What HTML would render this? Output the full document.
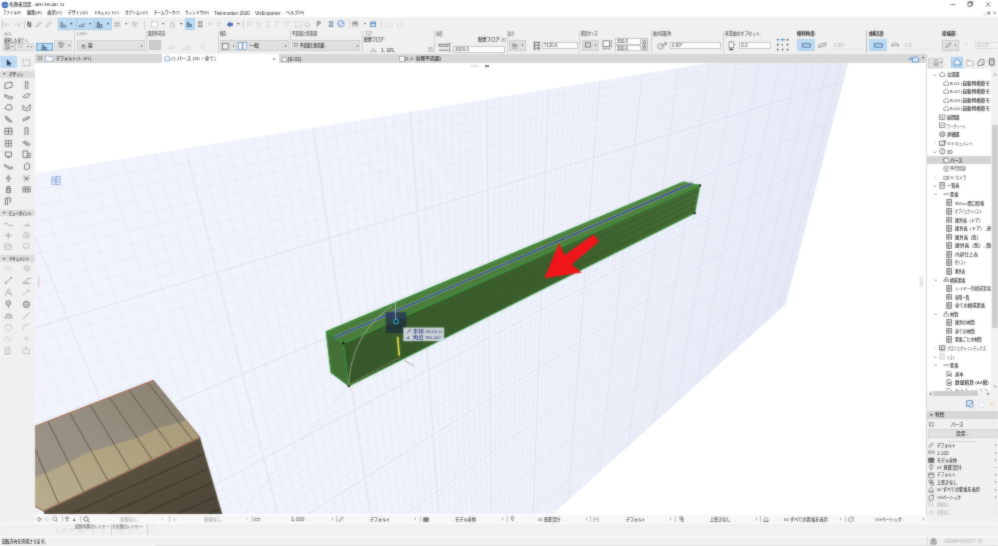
<!DOCTYPE html>
<html lang="ja"><head><meta charset="utf-8"><title>ARCHICAD 24</title>
<style>
html,body{margin:0;padding:0;}
body{width:998px;height:546px;overflow:hidden;background:#fff;position:relative;font-family:"Liberation Sans","Noto Sans CJK JP",sans-serif;filter:url(#soft);}
.b{position:absolute;display:block;}
.t{position:absolute;white-space:nowrap;line-height:1;transform-origin:0 50%;font-weight:500;}
</style></head>
<body>
<svg width="0" height="0" style="position:absolute"><filter id="soft" x="0" y="0" width="100%" height="100%" color-interpolation-filters="sRGB"><feGaussianBlur stdDeviation="0.8" result="b"/><feComposite in="SourceGraphic" in2="b" operator="arithmetic" k1="0" k2="0.5" k3="0.5" k4="0"/></filter></svg>
<div class="b" style="left:0px;top:0px;width:998px;height:17px;background:#ffffff;"></div>
<div class="b" style="left:0px;top:17px;width:998px;height:37px;background:#f0f0f0;"></div>
<div class="b" style="left:0px;top:54px;width:35px;height:470px;background:#f0f0f0;"></div>
<div class="b" style="left:35px;top:54.3px;width:892px;height:8.4px;background:#d7d7d7;"></div>
<div class="b" style="left:927px;top:54px;width:71px;height:462px;background:#f0f0f0;"></div>
<div class="b" style="left:35px;top:62.7px;width:892px;height:451.8px;background:#ffffff;"></div>
<div class="b" style="left:35px;top:514.5px;width:892px;height:8.5px;background:#f7f7f7;"></div>
<div class="b" style="left:927px;top:515px;width:71px;height:8px;background:#f0f0f0;"></div>
<div class="b" style="left:0px;top:523px;width:998px;height:13px;background:#f0f0f0;"></div>
<div class="b" style="left:0px;top:536px;width:998px;height:10px;background:#f1f1f1;"></div>
<div class="b" style="left:0px;top:523px;width:998px;height:1px;background:#fafafa;"></div>
<div class="b" style="left:0px;top:536px;width:998px;height:1px;background:#fbfbfb;"></div>
<div class="b" style="left:155px;top:545px;width:843px;height:1px;background:#d9d9d9;"></div>
<svg class="b" style="left:35px;top:62.7px;" width="892" height="451.8" viewBox="35 62.7 892 451.8"><defs><clipPath id="vp"><rect x="35" y="62.7" width="892" height="451.8"/></clipPath><linearGradient id="pl" gradientUnits="userSpaceOnUse" x1="250" y1="470" x2="850" y2="70"><stop offset="0" stop-color="#f1f4fc"/><stop offset="0.5" stop-color="#eff2fb"/><stop offset="1" stop-color="#edf0fa"/></linearGradient><clipPath id="plane"><polygon points="-244.7,218.6 854.5,39.0 785.6,304.1 163.7,865.0"/></clipPath></defs><g clip-path="url(#vp)"><polygon points="-244.7,218.6 854.5,39.0 785.6,304.1 163.7,865.0" fill="url(#pl)"/><g clip-path="url(#plane)" fill="none"><path d="M853.5 39.2L784.6 305.0M852.3 39.4L783.3 306.1M851.0 39.6L782.1 307.3M849.7 39.8L780.8 308.4M848.4 40.0L779.5 309.6M845.8 40.4L776.8 312.0M844.4 40.6L775.5 313.2M843.1 40.9L774.2 314.4M841.7 41.1L772.8 315.6M840.3 41.3L771.5 316.8M838.9 41.5L770.1 318.1M837.5 41.8L768.7 319.3M836.1 42.0L767.3 320.6M834.7 42.2L765.9 321.8M831.8 42.7L763.1 324.4M830.3 43.0L761.7 325.7M828.8 43.2L760.2 327.0M827.3 43.4L758.7 328.3M825.8 43.7L757.3 329.6M824.3 43.9L755.8 331.0M822.7 44.2L754.3 332.3M821.2 44.4L752.8 333.7M819.6 44.7L751.3 335.0M816.4 45.2L748.2 337.8M814.7 45.5L746.7 339.2M813.1 45.8L745.1 340.6M811.4 46.0L743.5 342.0M809.7 46.3L741.9 343.5M808.0 46.6L740.3 344.9M806.3 46.9L738.7 346.4M804.6 47.2L737.1 347.9M802.8 47.4L735.4 349.3M799.3 48.0L732.1 352.3M797.5 48.3L730.4 353.9M795.6 48.6L728.7 355.4M793.8 48.9L727.0 357.0M791.9 49.2L725.2 358.5M790.0 49.5L723.5 360.1M788.1 49.9L721.7 361.7M786.1 50.2L719.9 363.3M784.2 50.5L718.2 364.9M780.2 51.1L714.5 368.2M778.2 51.5L712.7 369.8M776.1 51.8L710.8 371.5M774.0 52.1L708.9 373.2M771.9 52.5L707.1 374.9M769.8 52.8L705.1 376.6M767.6 53.2L703.2 378.4M765.5 53.5L701.3 380.1M763.3 53.9L699.3 381.9M758.8 54.6L695.3 385.5M756.5 55.0L693.3 387.3M754.2 55.4L691.3 389.1M751.8 55.8L689.2 391.0M749.5 56.2L687.2 392.9M747.0 56.6L685.1 394.8M744.6 57.0L683.0 396.7M742.1 57.4L680.8 398.6M739.7 57.8L678.7 400.5M734.6 58.6L674.3 404.5M732.0 59.0L672.1 406.5M729.3 59.5L669.8 408.5M726.7 59.9L667.6 410.5M724.0 60.3L665.3 412.6M721.2 60.8L663.0 414.7M718.4 61.2L660.7 416.8M715.6 61.7L658.3 418.9M712.8 62.2L655.9 421.0M707.0 63.1L651.1 425.4M704.0 63.6L648.7 427.6M701.0 64.1L646.2 429.8M697.9 64.6L643.7 432.1M694.8 65.1L641.2 434.4M691.7 65.6L638.6 436.7M688.5 66.1L636.0 439.0M685.2 66.7L633.4 441.3M681.9 67.2L630.8 443.7M675.2 68.3L625.4 448.5M671.8 68.9L622.7 451.0M668.3 69.4L620.0 453.5M664.7 70.0L617.2 456.0M661.1 70.6L614.4 458.5M657.5 71.2L611.5 461.1M653.7 71.8L608.6 463.7M650.0 72.4L605.7 466.3M646.1 73.0L602.8 468.9M638.3 74.3L596.8 474.3M634.3 75.0L593.8 477.1M630.2 75.7L590.7 479.8M626.0 76.3L587.6 482.7M621.8 77.0L584.5 485.5M617.5 77.7L581.3 488.4M613.1 78.4L578.1 491.3M608.6 79.2L574.8 494.2M604.1 79.9L571.5 497.2M594.8 81.4L564.8 503.2M590.1 82.2L561.4 506.3M585.2 83.0L557.9 509.4M580.2 83.8L554.4 512.6M575.2 84.6L550.9 515.8M570.1 85.5L547.3 519.0M564.9 86.3L543.6 522.3M559.5 87.2L540.0 525.6M554.1 88.1L536.2 529.0M542.9 89.9L528.7 535.8M537.2 90.8L524.8 539.3M531.3 91.8L520.9 542.8M525.3 92.8L516.9 546.4M519.2 93.8L512.9 550.1M513.0 94.8L508.8 553.7M506.7 95.8L504.7 557.5M500.2 96.9L500.5 561.2M493.6 98.0L496.2 565.1M479.9 100.2L487.6 572.9M472.8 101.4L483.1 576.9M465.6 102.5L478.7 580.9M458.2 103.7L474.1 585.0M450.7 105.0L469.5 589.1M443.0 106.2L464.8 593.4M435.1 107.5L460.1 597.6M427.0 108.8L455.3 602.0M418.8 110.2L450.4 606.4M401.6 113.0L440.5 615.4M392.8 114.4L435.4 620.0M383.7 115.9L430.2 624.6M374.4 117.5L424.9 629.4M364.8 119.0L419.6 634.2M355.0 120.6L414.2 639.0M344.9 122.3L408.7 644.0M334.6 123.9L403.1 649.0M324.0 125.7L397.5 654.1M302.0 129.3L385.9 664.6M290.5 131.2L379.9 669.9M278.7 133.1L373.9 675.4M266.5 135.1L367.8 680.9M254.0 137.1L361.5 686.5M241.1 139.2L355.2 692.2M227.9 141.4L348.8 698.1M214.2 143.6L342.2 704.0M200.1 145.9L335.6 710.0M170.6 150.7L321.9 722.3M155.2 153.3L314.9 728.6M139.2 155.9L307.8 735.0M122.7 158.6L300.5 741.6M105.6 161.4L293.1 748.2M88.0 164.2L285.6 755.0M69.7 167.2L277.9 761.9M50.8 170.3L270.2 769.0M31.2 173.5L262.2 776.1M-10.2 180.3L245.9 790.8M-32.2 183.9L237.5 798.4M-54.9 187.6L228.9 806.1M-78.6 191.5L220.2 814.0M-103.3 195.5L211.3 822.0M-128.9 199.7L202.2 830.2M-155.7 204.1L193.0 838.5M-183.6 208.6L183.6 847.1M-212.8 213.4L173.9 855.7M-275.2 223.6L154.1 873.7M-308.7 229.1L143.8 882.9M-343.8 234.8L133.4 892.3M-380.6 240.8L122.7 902.0M-419.3 247.1L111.8 911.8M853.4 43.3L-233.0 237.2M852.3 47.6L-221.6 255.2M851.1 51.9L-210.5 272.7M850.0 56.2L-199.8 289.6M848.9 60.4L-189.5 306.0M847.8 64.6L-179.4 322.0M846.8 68.8L-169.6 337.5M845.7 72.9L-160.1 352.5M844.6 77.1L-150.8 367.2M842.5 85.2L-133.1 395.3M841.4 89.3L-124.6 408.7M840.4 93.3L-116.3 421.8M839.3 97.3L-108.2 434.6M838.3 101.3L-100.4 447.1M837.3 105.2L-92.7 459.2M836.3 109.2L-85.2 471.0M835.2 113.1L-78.0 482.5M834.2 116.9L-70.9 493.8M832.2 124.6L-57.2 515.5M831.3 128.4L-50.6 525.9M830.3 132.2L-44.1 536.1M829.3 136.0L-37.8 546.1M828.3 139.7L-31.6 555.9M827.3 143.5L-25.6 565.4M826.4 147.2L-19.7 574.7M825.4 150.8L-14.0 583.8M824.5 154.5L-8.4 592.7M822.6 161.7L2.5 610.0M821.7 165.3L7.8 618.3M820.7 168.9L13.0 626.5M819.8 172.4L18.0 634.5M818.9 176.0L23.0 642.3M818.0 179.5L27.8 650.0M817.1 183.0L32.6 657.5M816.2 186.4L37.3 664.9M815.3 189.9L41.8 672.2M813.5 196.7L50.7 686.2M812.6 200.1L55.0 693.0M811.7 203.5L59.2 699.7M810.9 206.9L63.4 706.3M810.0 210.2L67.5 712.7M809.1 213.5L71.4 719.0M808.3 216.8L75.4 725.3M807.4 220.1L79.2 731.4M806.6 223.3L83.0 737.3M804.9 229.8L90.4 749.0M804.1 233.0L94.0 754.7M803.2 236.2L97.5 760.3M802.4 239.4L100.9 765.7M801.6 242.5L104.4 771.1M800.8 245.7L107.7 776.4M800.0 248.8L111.0 781.6M799.2 251.9L114.2 786.8M798.4 255.0L117.4 791.8M796.8 261.1L123.6 801.6M796.0 264.2L126.7 806.4M795.2 267.2L129.6 811.2M794.4 270.2L132.6 815.8M793.6 273.2L135.5 820.4M792.9 276.1L138.3 824.9M792.1 279.1L141.1 829.3M791.3 282.0L143.9 833.7M790.6 285.0L146.6 838.0M789.1 290.8L151.9 846.4M788.3 293.7L154.5 850.5M787.6 296.5L157.0 854.5M786.8 299.4L159.6 858.5M786.1 302.2L162.0 862.5" stroke="#dce1f0" stroke-width="0.4"/><path d="M847.1 40.2L778.2 310.8M833.2 42.5L764.5 323.1M818.0 45.0L749.8 336.4M801.1 47.7L733.8 350.8M782.2 50.8L716.3 366.5M761.0 54.3L697.3 383.7M737.1 58.2L676.5 402.5M709.9 62.6L653.5 423.2M678.6 67.7L628.1 446.1M642.2 73.7L599.8 471.6M599.5 80.7L568.2 500.2M548.6 89.0L532.5 532.4M486.8 99.1L491.9 568.9M410.3 111.6L445.5 610.8M313.1 127.5L391.7 659.3M185.6 148.3L328.8 716.1M10.9 176.8L254.1 783.4M-243.3 218.4L164.1 864.6M843.5 81.2L-141.8 381.4M833.2 120.8L-63.9 504.8M823.5 158.1L-2.9 601.4M814.4 193.3L46.3 679.2M805.7 226.6L86.7 743.2M797.6 258.1L120.5 796.8M789.8 287.9L149.3 842.2" stroke="#d3d9ea" stroke-width="0.7"/></g><defs><linearGradient id="wgr" x1="0" y1="1" x2="1" y2="0"><stop offset="0" stop-color="#9f978b"/><stop offset="0.5" stop-color="#968e80"/><stop offset="1" stop-color="#897f70"/></linearGradient><linearGradient id="wye" x1="0" y1="1" x2="1" y2="0"><stop offset="0" stop-color="#b8ad8e"/><stop offset="1" stop-color="#a89b78"/></linearGradient><linearGradient id="wfr" x1="0" y1="0" x2="1" y2="1"><stop offset="0" stop-color="#625947"/><stop offset="1" stop-color="#4c4436"/></linearGradient></defs><polygon points="43.7,510.7 200.0,437.0 223.5,518.0 45.0,518.0" fill="url(#wfr)"/><line x1="203.0" y1="453.8" x2="40.0" y2="527.5" stroke="#3d3529" stroke-width="1.1"/><line x1="207.2" y1="468.9" x2="40.0" y2="544.5" stroke="#3d3529" stroke-width="1.1"/><line x1="211.3" y1="482.6" x2="40.0" y2="560.0" stroke="#3d3529" stroke-width="1.1"/><line x1="215.4" y1="496.4" x2="40.0" y2="575.7" stroke="#3d3529" stroke-width="1.1"/><line x1="219.6" y1="508.7" x2="40.0" y2="589.9" stroke="#3d3529" stroke-width="1.1"/><line x1="223.5" y1="521.0" x2="40.0" y2="603.9" stroke="#3d3529" stroke-width="1.1"/><polygon points="30.0,427.9 153.4,379.9 200.0,437.0 43.7,510.7 30.0,503.3" fill="url(#wgr)"/><polygon points="30.0,479.5 57.5,467.5 90.0,451.5 139.4,437.0 159.2,427.2 182.3,421.4 185.2,418.8 200.0,437.0 43.7,510.7 30.0,503.3" fill="url(#wye)"/><line x1="147.7" y1="382.1" x2="193.0" y2="440.3" stroke="#5a4c3d" stroke-width="0.85"/><line x1="128.7" y1="389.5" x2="172.4" y2="449.0" stroke="#5a4c3d" stroke-width="0.85"/><line x1="109.4" y1="397.0" x2="151.8" y2="458.7" stroke="#5a4c3d" stroke-width="0.85"/><line x1="90.0" y1="404.6" x2="130.3" y2="469.9" stroke="#5a4c3d" stroke-width="0.85"/><line x1="69.7" y1="412.4" x2="108.0" y2="480.4" stroke="#5a4c3d" stroke-width="0.85"/><line x1="47.9" y1="421.0" x2="83.8" y2="491.9" stroke="#5a4c3d" stroke-width="0.85"/><line x1="26.4" y1="429.3" x2="58.8" y2="503.6" stroke="#5a4c3d" stroke-width="0.85"/><polyline points="30.0,427.9 153.4,379.9" fill="none" stroke="#a86a56" stroke-width="1.1"/><polyline points="200.0,437.0 43.7,510.7 30.0,503.3" fill="none" stroke="#9c6f58" stroke-width="1.3"/><polyline points="153.4,379.9 200.0,437.0" fill="none" stroke="#7d6a56" stroke-width="0.8"/><defs><linearGradient id="bfr" x1="0" y1="1" x2="1" y2="0"><stop offset="0" stop-color="#36582a"/><stop offset="0.6" stop-color="#3c5f2d"/><stop offset="1" stop-color="#466c37"/></linearGradient><linearGradient id="btp" x1="0" y1="1" x2="1" y2="0"><stop offset="0" stop-color="#497b3a"/><stop offset="1" stop-color="#528340"/></linearGradient></defs><polygon points="326.1,331.2 343.4,343.0 348.8,385.8 331.0,372.4" fill="#447037" stroke="#35973a" stroke-width="1"/><polygon points="343.4,343.0 699.9,185.1 694.7,212.8 348.8,385.8" fill="url(#bfr)" stroke="#35973a" stroke-width="1"/><polygon points="326.1,331.2 683.4,181.6 699.9,185.1 343.4,343.0" fill="url(#btp)" stroke="#35973a" stroke-width="1"/><line x1="344.5" y1="351.6" x2="698.9" y2="190.6" stroke="#345a25" stroke-width="0.8"/><line x1="345.6" y1="360.1" x2="697.8" y2="196.2" stroke="#345a25" stroke-width="0.8"/><line x1="346.6" y1="368.7" x2="696.8" y2="201.7" stroke="#345a25" stroke-width="0.8"/><line x1="347.7" y1="377.2" x2="695.7" y2="207.3" stroke="#345a25" stroke-width="0.8"/><line x1="327.6" y1="343.6" x2="345.0" y2="355.8" stroke="#406b2f" stroke-width="0.7"/><line x1="328.6" y1="351.8" x2="346.1" y2="364.4" stroke="#406b2f" stroke-width="0.7"/><line x1="329.5" y1="360.0" x2="347.2" y2="373.0" stroke="#406b2f" stroke-width="0.7"/><line x1="334.8" y1="337.1" x2="691.6" y2="183.3" stroke="#78957a" stroke-width="3.4" opacity="0.8"/><line x1="334.8" y1="337.1" x2="691.6" y2="183.3" stroke="#2f4fa0" stroke-width="1.3"/><circle cx="343.4" cy="343.0" r="1.2" fill="#0c140c"/><circle cx="348.8" cy="385.8" r="1.2" fill="#0c140c"/><circle cx="699.9" cy="185.1" r="1.2" fill="#0c140c"/><circle cx="694.7" cy="212.8" r="1.2" fill="#0c140c"/><path d="M348 386 C326 412 296 446 269 478 S250 506 244 518" fill="none" stroke="#d8dcea" stroke-width="0.5"/><path d="M348.8 384 C350 352 366 322 392 306" fill="none" stroke="#b4c2a6" stroke-width="0.7"/><line x1="349.5" y1="384" x2="400" y2="357" stroke="#c9a26a" stroke-width="0.7" stroke-dasharray="1.5 1"/><rect x="385.8" y="312" width="20.5" height="20.7" fill="#18223f" opacity="0.62"/><rect x="385.8" y="312" width="20.5" height="8" fill="#2a3f9a" opacity="0.25"/><line x1="395.5" y1="299" x2="395.5" y2="318.5" stroke="#cfd6e2" stroke-width="0.6"/><circle cx="396" cy="321.2" r="2.3" fill="#16364e" stroke="#2f9fbd" stroke-width="1.1"/><line x1="397.7" y1="336.5" x2="399.2" y2="355.5" stroke="#efe043" stroke-width="1.8"/><line x1="404.4" y1="360" x2="414.5" y2="366" stroke="#9a9a98" stroke-width="0.8"/><rect x="403.3" y="327.2" width="40.8" height="13.6" fill="#d3d9de" opacity="0.96"/><polygon points="544.4,278 559.2,242.4 564.4,254.9 593.5,234.1 599.2,241.2 571.7,264.2 581.9,272.3" fill="#ef151b"/><g stroke="#6a8ccb" stroke-width="0.6" fill="none"><rect x="51.8" y="176.6" width="3.4" height="7.4"/><rect x="56.2" y="176" width="3.8" height="8.2"/><path d="M51.8 179h3.4M51.8 181.4h3.4M56.2 178.8h3.8M56.2 181.4h3.8"/></g><rect x="37.6" y="276" width="2" height="11" fill="#ecd3d4"/><rect x="470" y="64.6" width="9" height="2.4" rx="1" fill="#e4e4e4"/><rect x="485" y="64.8" width="4" height="2" fill="#777"/><rect x="919.5" y="276" width="3.5" height="11" fill="#e6e6e6"/></g></svg>
<span class="t" style="left:405.50px;top:330.00px;font-size:4.4px;color:#24327e;transform:scaleX(1.239);">&#8599; 半径 4101.0</span>
<span class="t" style="left:405.50px;top:336.00px;font-size:4.4px;color:#24327e;transform:scaleX(1.287);">&#8737; 角度 90.00&#176;</span>
<svg class="b" style="left:1px;top:1px;" width="8" height="8" viewBox="0 0 8 8"><circle cx="4" cy="4" r="3.3" fill="#2d5fa8"/><path d="M1.2 5.2C3 3 5 3 6.8 4.6" stroke="#cfe0f5" stroke-width="0.8" fill="none"/><path d="M2 6.2C3.5 4.6 5 4.8 6.2 6" stroke="#9fc0ea" stroke-width="0.6" fill="none"/></svg>
<span class="t" style="left:9.50px;top:3.00px;font-size:4.4px;color:#1a1a1a;">名称未設定 - ARCHICAD 24</span>
<svg class="b" style="left:945px;top:0px;" width="53" height="10" viewBox="0 0 53 10"><path d="M5.5 4.5h5" stroke="#444" stroke-width="0.7"/><rect x="23" y="2.6" width="3.6" height="3.6" fill="none" stroke="#333" stroke-width="0.7"/><path d="M24 2.6v-0.9h3.6v3.6h-1" fill="none" stroke="#333" stroke-width="0.6"/><path d="M41 2.2l4.4 4.4M45.4 2.2l-4.4 4.4" stroke="#333" stroke-width="0.7"/></svg>
<svg class="b" style="left:982px;top:10px;" width="16" height="6" viewBox="0 0 16 6"><path d="M1.5 4.6h2" stroke="#666" stroke-width="0.5"/><path d="M6 1.4v3.2M7.6 1.4v3.2M5.2 2.4h3.2M5.2 3.8h3.2" stroke="#555" stroke-width="0.5"/><path d="M11.4 1.6l2.4 2.6M13.8 1.6l-2.4 2.6" stroke="#444" stroke-width="0.6"/></svg>
<span class="t" style="left:3.00px;top:11.00px;font-size:4.4px;color:#1c1c1c;transform:scaleX(0.777);">ファイル(F)</span>
<span class="t" style="left:27.00px;top:11.00px;font-size:4.4px;color:#1c1c1c;transform:scaleX(1.025);">編集(E)</span>
<span class="t" style="left:47.00px;top:11.00px;font-size:4.4px;color:#1c1c1c;transform:scaleX(1.025);">表示(V)</span>
<span class="t" style="left:68.00px;top:11.00px;font-size:4.4px;color:#1c1c1c;transform:scaleX(0.845);">デザイン(D)</span>
<span class="t" style="left:94.00px;top:11.00px;font-size:4.4px;color:#1c1c1c;transform:scaleX(0.770);">ドキュメント(C)</span>
<span class="t" style="left:125.00px;top:11.00px;font-size:4.4px;color:#1c1c1c;transform:scaleX(0.813);">オプション(O)</span>
<span class="t" style="left:154.00px;top:11.00px;font-size:4.4px;color:#1c1c1c;transform:scaleX(0.817);">チームワーク(T)</span>
<span class="t" style="left:185.00px;top:11.00px;font-size:4.4px;color:#1c1c1c;transform:scaleX(0.827);">ウィンドウ(W)</span>
<span class="t" style="left:214.00px;top:11.00px;font-size:5.0px;color:#1c1c1c;transform:scaleX(0.952);">Twinmotion 2020</span>
<span class="t" style="left:255.00px;top:11.00px;font-size:5.0px;color:#1c1c1c;">VizExporter</span>
<span class="t" style="left:286.00px;top:11.00px;font-size:4.4px;color:#1c1c1c;transform:scaleX(0.934);">ヘルプ(H)</span>
<div class="b" style="left:1.5px;top:19.5px;width:0.8px;height:9px;background:#c4c4c4;"></div>
<svg class="b" style="left:3.5px;top:20.5px;" width="7" height="7" viewBox="0 0 7 7"><path d="M1 2.2v2.6h2.6M1.2 4.6C2.4 2.4 5.4 2.2 6.2 5" fill="none" stroke="#c2c2c2" stroke-width="0.7"/></svg>
<svg class="b" style="left:13.5px;top:20.5px;" width="7" height="7" viewBox="0 0 7 7"><path d="M6 2.2v2.6H3.4M5.8 4.6C4.6 2.4 1.6 2.2 0.8 5" fill="none" stroke="#c2c2c2" stroke-width="0.7"/></svg>
<div class="b" style="left:23.5px;top:19.5px;width:0.7px;height:9.0px;background:#d0d0d0;"></div>
<svg class="b" style="left:26.2px;top:20.7px;" width="6.6" height="6.6" viewBox="0 0 7 7"><path d="M2.2 0.8v2.4M4.6 0.8v2.4M1.2 3.2h4.6M2.2 3.2v2.8h2.4V3.2" fill="none" stroke="#3a3a3a" stroke-width="0.8"/><circle cx="2.4" cy="1.4" r="0.8" fill="#3a3a3a"/><circle cx="4.8" cy="5.4" r="0.8" fill="#3a3a3a"/></svg>
<svg class="b" style="left:35.0px;top:20.5px;" width="7" height="7" viewBox="0 0 7 7"><path d="M1 6l0.6-1.8L5.4 0.8l1 1L2.8 5.6z" fill="none" stroke="#9a9a9a" stroke-width="0.7"/></svg>
<svg class="b" style="left:45.0px;top:20.5px;" width="7" height="7" viewBox="0 0 7 7"><path d="M1 6l0.6-1.8L5.4 0.8l1 1L2.8 5.6z" fill="none" stroke="#a8a8a8" stroke-width="0.7"/></svg>
<div class="b" style="left:58px;top:18px;width:53.5px;height:11.5px;background:#bddcf4;box-shadow:inset 0 0 0 1px #a8cdea;"></div>
<svg class="b" style="left:60.0px;top:20.5px;" width="7" height="7" viewBox="0 0 7 7"><path d="M0.8 6h5.6L1.2 0.8z" fill="none" stroke="#3a4a5a" stroke-width="0.7"/><path d="M2.4 6V3.6" stroke="#3a4a5a" stroke-width="0.7"/></svg>
<svg class="b" style="left:70.2px;top:23.22px;" width="2.6" height="1.6900000000000002" viewBox="0 0 2.6 1.6900000000000002"><path d="M0 0h2.6L1.3 1.6900000000000002z" fill="#333"/></svg>
<div class="b" style="left:75.5px;top:18.5px;width:0.7px;height:10.5px;background:#9fc4e2;"></div>
<svg class="b" style="left:78.0px;top:20.5px;" width="7" height="7" viewBox="0 0 7 7"><path d="M0.6 5.6h5.8M0.8 5.2L6 2.6v2.6" fill="none" stroke="#4a5a6a" stroke-width="0.7"/></svg>
<svg class="b" style="left:88.7px;top:23.22px;" width="2.6" height="1.6900000000000002" viewBox="0 0 2.6 1.6900000000000002"><path d="M0 0h2.6L1.3 1.6900000000000002z" fill="#333"/></svg>
<div class="b" style="left:93.5px;top:18.5px;width:0.7px;height:10.5px;background:#9fc4e2;"></div>
<svg class="b" style="left:96.0px;top:20.5px;" width="7" height="7" viewBox="0 0 7 7"><path d="M1.2 6.2V2.4h2v3.8M3.2 6.2V3.6h2.6v2.6M0.6 6.2h6" fill="none" stroke="#34424f" stroke-width="0.7"/><circle cx="2.2" cy="1.2" r="0.8" fill="#34424f"/></svg>
<svg class="b" style="left:106.7px;top:23.22px;" width="2.6" height="1.6900000000000002" viewBox="0 0 2.6 1.6900000000000002"><path d="M0 0h2.6L1.3 1.6900000000000002z" fill="#333"/></svg>
<svg class="b" style="left:113.5px;top:20.5px;" width="7" height="7" viewBox="0 0 7 7"><path d="M2.2 0.6v5.8M4.8 0.6v5.8M0.6 2.2h5.8M0.6 4.8h5.8" fill="none" stroke="#777" stroke-width="0.7" stroke-dasharray="1.2 0.6"/></svg>
<svg class="b" style="left:124.7px;top:23.22px;" width="2.6" height="1.6900000000000002" viewBox="0 0 2.6 1.6900000000000002"><path d="M0 0h2.6L1.3 1.6900000000000002z" fill="#555"/></svg>
<svg class="b" style="left:130.5px;top:20.5px;" width="7" height="7" viewBox="0 0 7 7"><path d="M0.8 2l5 2.4M1.2 4.4l4 1.6M2 1l4.4 1.6" fill="none" stroke="#9a9a9a" stroke-width="0.7"/></svg>
<div class="b" style="left:143.5px;top:19.5px;width:0.7px;height:9.0px;background:#d0d0d0;"></div>
<svg class="b" style="left:151.0px;top:20.5px;" width="7" height="7" viewBox="0 0 7 7"><rect x="0.6" y="0.9" width="5.8" height="5.2" fill="#fff" stroke="#bdbdbd" stroke-width="0.7"/></svg>
<svg class="b" style="left:161.7px;top:23.22px;" width="2.6" height="1.6900000000000002" viewBox="0 0 2.6 1.6900000000000002"><path d="M0 0h2.6L1.3 1.6900000000000002z" fill="#555"/></svg>
<svg class="b" style="left:169.0px;top:20.5px;" width="7" height="7" viewBox="0 0 7 7"><rect x="1.4" y="3" width="4.2" height="3.2" fill="none" stroke="#bbb" stroke-width="0.7"/><path d="M2.4 3V1.8a1.1 1.1 0 0 1 2.2 0V3" fill="none" stroke="#bbb" stroke-width="0.7"/></svg>
<svg class="b" style="left:180.2px;top:23.22px;" width="2.6" height="1.6900000000000002" viewBox="0 0 2.6 1.6900000000000002"><path d="M0 0h2.6L1.3 1.6900000000000002z" fill="#444"/></svg>
<div class="b" style="left:185px;top:18px;width:9.5px;height:11.5px;background:#bddcf4;box-shadow:inset 0 0 0 1px #a8cdea;"></div>
<svg class="b" style="left:186.4px;top:20.7px;" width="6.6" height="6.6" viewBox="0 0 7 7"><path d="M1.2 6.2V2.4h2v3.8M3.2 6.2V3.6h2.6v2.6M0.6 6.2h6" fill="none" stroke="#2c4c72" stroke-width="0.8"/><circle cx="2.2" cy="1.2" r="0.8" fill="#2c4c72"/></svg>
<svg class="b" style="left:197.3px;top:20.8px;" width="6.4" height="6.4" viewBox="0 0 7 7"><path d="M0.8 1h5.4M0.8 6h5.4M2.2 1v5M4.8 1v5" fill="none" stroke="#484848" stroke-width="0.7"/></svg>
<svg class="b" style="left:206.7px;top:21.2px;" width="5.6" height="5.6" viewBox="0 0 7 7"><path d="M1.4 1.6l4.2 3.8M5.6 1.6L1.4 5.4" fill="none" stroke="#a4a4a4" stroke-width="0.7"/></svg>
<svg class="b" style="left:216.0px;top:21.0px;" width="6" height="6" viewBox="0 0 7 7"><path d="M2.2 0.6v5.8M4.8 0.6v5.8M0.6 2.2h5.8M0.6 4.8h5.8" fill="none" stroke="#c4c4c4" stroke-width="0.7" stroke-dasharray="1.2 0.6"/></svg>
<svg class="b" style="left:226.3px;top:20.3px;" width="7.4" height="7.4" viewBox="0 0 7 7"><path d="M0.6 4.4L4 1v1.8h2.6v2.8H4v1.6z" fill="#4a6db4"/></svg>
<svg class="b" style="left:237.2px;top:23.22px;" width="2.6" height="1.6900000000000002" viewBox="0 0 2.6 1.6900000000000002"><path d="M0 0h2.6L1.3 1.6900000000000002z" fill="#444"/></svg>
<div class="b" style="left:243px;top:19.5px;width:0.7px;height:9.0px;background:#d0d0d0;"></div>
<svg class="b" style="left:246.0px;top:20.5px;" width="7" height="7" viewBox="0 0 7 7"><path d="M1.6 6.4V0.8h3.2v2.6H1.6" fill="none" stroke="#cdcdcd" stroke-width="0.7"/></svg>
<svg class="b" style="left:255.0px;top:20.5px;" width="7" height="7" viewBox="0 0 7 7"><path d="M0.8 2l5 2.4M1.2 4.4l4 1.6M2 1l4.4 1.6" fill="none" stroke="#cdcdcd" stroke-width="0.7"/></svg>
<svg class="b" style="left:265.0px;top:20.5px;" width="7" height="7" viewBox="0 0 7 7"><path d="M3.5 0.8v5.4M1.6 0.8h3.8M1.6 6.2h3.8" fill="none" stroke="#cdcdcd" stroke-width="0.7"/></svg>
<svg class="b" style="left:274.5px;top:20.5px;" width="7" height="7" viewBox="0 0 7 7"><path d="M1 6V1M1 1h4" fill="none" stroke="#cdcdcd" stroke-width="0.7"/></svg>
<svg class="b" style="left:284.5px;top:20.5px;" width="7" height="7" viewBox="0 0 7 7"><path d="M1 6V1M1 1h4" fill="none" stroke="#cdcdcd" stroke-width="0.7"/></svg>
<svg class="b" style="left:294.5px;top:20.5px;" width="7" height="7" viewBox="0 0 7 7"><rect x="0.6" y="0.9" width="5.8" height="5.2" fill="none" stroke="#cdcdcd" stroke-width="0.7"/></svg>
<svg class="b" style="left:303.8px;top:20.8px;" width="6.4" height="6.4" viewBox="0 0 7 7"><path d="M0.8 3.6L3.5 1l2.7 2.6M1.4 3.4v2.8h4.2V3.4" fill="none" stroke="#b0b0b0" stroke-width="0.7"/></svg>
<svg class="b" style="left:316.0px;top:21.0px;" width="6" height="6" viewBox="0 0 7 7"><path d="M1.6 6.4V0.8h3.2v2.6H1.6" fill="none" stroke="#444" stroke-width="0.8"/></svg>
<svg class="b" style="left:327.9px;top:20.9px;" width="6.2" height="6.2" viewBox="0 0 7 7"><path d="M0.8 1h5.4M0.8 6h5.4M2.2 1v5M4.8 1v5" fill="none" stroke="#3a5784" stroke-width="0.8"/></svg>
<svg class="b" style="left:337.2px;top:20.2px;" width="7.6" height="7.6" viewBox="0 0 7 7"><circle cx="3.5" cy="3.3" r="2.8" fill="#e8f0fa" stroke="#4a78b8" stroke-width="0.8"/><path d="M3.6 3.4h2.8v2.6H3.6z" fill="#fff" stroke="#4a78b8" stroke-width="0.5"/></svg>
<div class="b" style="left:348.5px;top:19.5px;width:0.7px;height:9.0px;background:#d0d0d0;"></div>
<svg class="b" style="left:352.4px;top:20.9px;" width="6.2" height="6.2" viewBox="0 0 7 7"><path d="M1 6.2V1h5v5.2M1 2.6h5M3.5 1v5.2" fill="none" stroke="#555" stroke-width="0.7"/></svg>
<svg class="b" style="left:364.4px;top:23.34px;" width="2.2" height="1.4300000000000002" viewBox="0 0 2.2 1.4300000000000002"><path d="M0 0h2.2L1.1 1.4300000000000002z" fill="#333"/></svg>
<svg class="b" style="left:369.8px;top:20.8px;" width="6.4" height="6.4" viewBox="0 0 7 7"><rect x="0.8" y="1.2" width="5.4" height="5" fill="#dbe8f8" stroke="#3d6aae" stroke-width="0.8"/><path d="M0.8 2.8h5.4" stroke="#3d6aae" stroke-width="0.8"/></svg>
<div class="b" style="left:381px;top:19.5px;width:0.7px;height:9.0px;background:#d0d0d0;"></div>
<svg class="b" style="left:385.5px;top:20.5px;" width="7" height="7" viewBox="0 0 7 7"><path d="M1.4 5.8h4a1.3 1.3 0 0 0 .2-2.6 1.9 1.9 0 0 0-3.6-.4A1.5 1.5 0 0 0 1.4 5.8z" fill="none" stroke="#d4d4d4" stroke-width="0.7"/></svg>
<svg class="b" style="left:396.5px;top:20.5px;" width="7" height="7" viewBox="0 0 7 7"><path d="M1.4 5.8h4a1.3 1.3 0 0 0 .2-2.6 1.9 1.9 0 0 0-3.6-.4A1.5 1.5 0 0 0 1.4 5.8z" fill="none" stroke="#cfcfcf" stroke-width="0.7"/></svg>
<span class="t" style="left:4.00px;top:32.00px;font-size:4.4px;color:#4a4a4a;transform:scaleX(0.555);">メイン:</span>
<span class="t" style="left:4.00px;top:39.00px;font-size:4.4px;color:#333;transform:scaleX(0.768);">選択した全て: 1</span>
<div class="b" style="left:3px;top:42.6px;width:11.5px;height:8.2px;background:#e1e1e1;box-shadow:inset 0 0 0 1px #cfcfcf;"></div>
<span class="t" style="left:4.60px;top:45.00px;font-size:4.2px;color:#444;transform:scaleX(0.596);">設定</span>
<svg class="b" style="left:11px;top:46.2px;" width="2" height="1.3" viewBox="0 0 2 1.3"><path d="M0 0h2L1 1.3z" fill="#333"/></svg>
<div class="b" style="left:15px;top:42.6px;width:18.5px;height:8.2px;background:#e6e6e6;box-shadow:inset 0 0 0 1px #d2d2d2;"></div>
<svg class="b" style="left:18.2px;top:44.0px;" width="5.6" height="5.6" viewBox="0 0 7 7"><rect x="0.6" y="0.9" width="4.3999999999999995" height="3.8" fill="none" stroke="#aaa" stroke-width="0.6"/></svg>
<svg class="b" style="left:26.8px;top:46.0px;" width="2" height="1.3" viewBox="0 0 2 1.3"><path d="M0 0h2L1 1.3z" fill="#333"/></svg>
<svg class="b" style="left:31.06px;top:45.9px;" width="1.1700000000000002" height="1.8" viewBox="0 0 1.1700000000000002 1.8"><path d="M0 0v1.8L1.1700000000000002 0.9z" fill="#333"/></svg>
<div class="b" style="left:35.8px;top:42.8px;width:17.4px;height:8px;background:#bcdaf2;box-shadow:inset 0 0 0 1px #6aa2d4;"></div>
<svg class="b" style="left:41.2px;top:43.5px;" width="6.6" height="6.6" viewBox="0 0 7 7"><path d="M1.2 6.2V2.4h2v3.8M3.2 6.2V3.6h2.6v2.6M0.6 6.2h6" fill="none" stroke="#2e4a6a" stroke-width="0.8"/><circle cx="2.2" cy="1.2" r="0.8" fill="#2e4a6a"/></svg>
<div class="b" style="left:54px;top:39.8px;width:18px;height:10.9px;background:#e4e4e4;box-shadow:inset 0 0 0 1px #d4d4d4;"></div>
<svg class="b" style="left:56.6px;top:41.4px;" width="8" height="8" viewBox="0 0 7 7"><path d="M0.8 2l5 2.4M1.2 4.4l4 1.6M2 1l4.4 1.6" fill="none" stroke="#555" stroke-width="0.7"/></svg>
<svg class="b" style="left:68.4px;top:45.0px;" width="2" height="1.3" viewBox="0 0 2 1.3"><path d="M0 0h2L1 1.3z" fill="#333"/></svg>
<div class="b" style="left:74.3px;top:31px;width:0.7px;height:21.5px;background:#d0d0d0;"></div>
<span class="t" style="left:76.50px;top:32.00px;font-size:4.4px;color:#4a4a4a;transform:scaleX(0.590);">レイヤー:</span>
<div class="b" style="left:77px;top:39.8px;width:67.5px;height:10.9px;background:#e1e1e1;box-shadow:inset 0 0 0 1px #d0d0d0;"></div>
<svg class="b" style="left:81.0px;top:43.5px;" width="5" height="5" viewBox="0 0 7 7"><circle cx="3.5" cy="3.5" r="2.7" fill="none" stroke="#555" stroke-width="0.7"/></svg>
<div class="b" style="left:82.8px;top:45.3px;width:1.4px;height:1.4px;background:#444;"></div>
<span class="t" style="left:88.00px;top:44.00px;font-size:4.4px;color:#222;transform:scaleX(1.044);">梁</span>
<svg class="b" style="left:140.9px;top:45px;" width="1.3" height="2" viewBox="0 0 1.3 2"><path d="M0 0v2L1.3 1z" fill="#333"/></svg>
<div class="b" style="left:146.3px;top:31px;width:0.7px;height:21.5px;background:#d0d0d0;"></div>
<span class="t" style="left:148.30px;top:32.00px;font-size:4.4px;color:#4a4a4a;transform:scaleX(0.776);">図形作成法:</span>
<div class="b" style="left:148.5px;top:39.8px;width:12px;height:10.7px;background:#cbcbcb;box-shadow:inset 0 0 0 1px #c0c0c0;"></div>
<span class="t" style="left:151.00px;top:44.00px;font-size:5px;color:#dadada;transform:scaleX(1.400);">&#8213;</span>
<svg class="b" style="left:167.0px;top:42.0px;" width="8" height="8" viewBox="0 0 7 7"><path d="M0.6 5.6h5.8M0.8 5.2L6 2.6v2.6" fill="none" stroke="#d2d2d2" stroke-width="0.7"/></svg>
<svg class="b" style="left:181.5px;top:41.5px;" width="9" height="9" viewBox="0 0 7 7"><path d="M0.6 5.6h5.8M0.8 5.2L6 2.6v2.6" fill="none" stroke="#d2d2d2" stroke-width="0.7"/></svg>
<svg class="b" style="left:198.5px;top:42.5px;" width="7" height="7" viewBox="0 0 7 7"><path d="M0.8 2l5 2.4M1.2 4.4l4 1.6M2 1l4.4 1.6" fill="none" stroke="#d6d6d6" stroke-width="0.7"/></svg>
<svg class="b" style="left:209.96px;top:45.1px;" width="1.1700000000000002" height="1.8" viewBox="0 0 1.1700000000000002 1.8"><path d="M0 0v1.8L1.1700000000000002 0.9z" fill="#cfcfcf"/></svg>
<div class="b" style="left:218.2px;top:31px;width:0.7px;height:21.5px;background:#d0d0d0;"></div>
<span class="t" style="left:220.00px;top:32.00px;font-size:4.4px;color:#4a4a4a;transform:scaleX(0.699);">構造:</span>
<div class="b" style="left:220px;top:39.8px;width:68.5px;height:10.9px;background:#e0e0e0;box-shadow:inset 0 0 0 1px #cdcdcd;"></div>
<svg class="b" style="left:222px;top:42.6px;" width="7" height="7" viewBox="0 0 7 7"><rect x="0.5" y="0.5" width="5.6" height="5.6" fill="#f6f6f6" stroke="#555" stroke-width="0.7"/></svg>
<svg class="b" style="left:232.9px;top:45px;" width="1.3" height="2" viewBox="0 0 1.3 2"><path d="M0 0v2L1.3 1z" fill="#333"/></svg>
<div class="b" style="left:236px;top:41px;width:0.7px;height:10px;background:#c8c8c8;"></div>
<svg class="b" style="left:238px;top:42px;" width="9.5" height="8" viewBox="0 0 9.5 8"><rect x="0.5" y="0.5" width="3.6" height="7" fill="#fff" stroke="#4a78b8" stroke-width="0.6"/><rect x="5" y="0.5" width="3.6" height="7" fill="#fff" stroke="#4a78b8" stroke-width="0.6"/></svg>
<span class="t" style="left:249.00px;top:44.00px;font-size:4.4px;color:#222;transform:scaleX(1.137);">一般</span>
<svg class="b" style="left:284.9px;top:45px;" width="1.3" height="2" viewBox="0 0 1.3 2"><path d="M0 0v2L1.3 1z" fill="#333"/></svg>
<div class="b" style="left:290.2px;top:31px;width:0.7px;height:21.5px;background:#d0d0d0;"></div>
<span class="t" style="left:292.00px;top:32.00px;font-size:4.4px;color:#4a4a4a;transform:scaleX(0.813);">平面図と断面図:</span>
<div class="b" style="left:292px;top:39.8px;width:68px;height:10.9px;background:#e0e0e0;box-shadow:inset 0 0 0 1px #cdcdcd;"></div>
<svg class="b" style="left:293.8px;top:43.3px;" width="5.4" height="5.4" viewBox="0 0 7 7"><rect x="0.6" y="0.9" width="4.2" height="3.6000000000000005" fill="none" stroke="#555" stroke-width="0.6"/></svg>
<span class="t" style="left:300.00px;top:44.00px;font-size:4.4px;color:#222;transform:scaleX(0.785);">平面図と断面図...</span>
<svg class="b" style="left:356.9px;top:45px;" width="1.3" height="2" viewBox="0 0 1.3 2"><path d="M0 0v2L1.3 1z" fill="#333"/></svg>
<div class="b" style="left:361.6px;top:31px;width:0.7px;height:21.5px;background:#d0d0d0;"></div>
<span class="t" style="left:364.50px;top:32.00px;font-size:4.4px;color:#777;transform:scaleX(0.555);">フロア:</span>
<span class="t" style="left:364.00px;top:38.00px;font-size:4.4px;color:#222;transform:scaleX(0.906);">配置フロア:</span>
<svg class="b" style="left:368.5px;top:46.5px;" width="9" height="5.5" viewBox="0 0 9 5.5"><path d="M0.5 5h8M2 5l2.4-3.6L6.8 5" fill="none" stroke="#777" stroke-width="0.6"/></svg>
<span class="t" style="left:381.00px;top:48.00px;font-size:5.0px;color:#222;transform:scaleX(0.987);">1. 1FL</span>
<div class="b" style="left:428px;top:46.5px;width:4.5px;height:5px;background:#e4e4e4;box-shadow:inset 0 0 0 1px #c4c4c4;"></div>
<svg class="b" style="left:429.92px;top:48.2px;" width="1.04" height="1.6" viewBox="0 0 1.04 1.6"><path d="M0 0v1.6L1.04 0.8z" fill="#333"/></svg>
<div class="b" style="left:434.3px;top:31px;width:0.7px;height:21.5px;background:#d0d0d0;"></div>
<span class="t" style="left:436.00px;top:32.00px;font-size:4.4px;color:#4a4a4a;transform:scaleX(0.749);">高度:</span>
<svg class="b" style="left:437.5px;top:41.5px;" width="13" height="10" viewBox="0 0 13 10"><path d="M1 2.2h9v2H1zM1 8.2h9" fill="none" stroke="#444" stroke-width="0.7"/><path d="M11.6 1v8.4M10.6 2.2l1-1.2 1 1.2M10.6 8.2l1 1.2 1-1.2" fill="none" stroke="#444" stroke-width="0.5"/></svg>
<span class="t" style="left:478.00px;top:38.00px;font-size:4.4px;color:#222;transform:scaleX(0.979);">配置フロア</span>
<div class="b" style="left:501px;top:37.8px;width:4.5px;height:4.6px;background:#e4e4e4;box-shadow:inset 0 0 0 1px #c4c4c4;"></div>
<svg class="b" style="left:502.92px;top:39.3px;" width="1.04" height="1.6" viewBox="0 0 1.04 1.6"><path d="M0 0v1.6L1.04 0.8z" fill="#333"/></svg>
<div class="b" style="left:453px;top:45.5px;width:52px;height:7px;background:#ffffff;box-shadow:inset 0 0 0 1px #c4c4c4;"></div>
<span class="t" style="left:455.00px;top:47.00px;font-size:5.0px;color:#333;transform:scaleX(0.915);">3000.0</span>
<div class="b" style="left:506.6px;top:31px;width:0.7px;height:21.5px;background:#d0d0d0;"></div>
<span class="t" style="left:508.00px;top:32.00px;font-size:4.4px;color:#4a4a4a;transform:scaleX(0.699);">長さ:</span>
<div class="b" style="left:509px;top:39.5px;width:16.5px;height:11.5px;background:#dedede;box-shadow:inset 0 0 0 1px #cbcbcb;"></div>
<span class="t" style="left:512.00px;top:43.00px;font-size:5.0px;color:#444;transform:scaleX(1.023);">&#8470;</span>
<svg class="b" style="left:521.8px;top:44.2px;" width="1.3" height="2" viewBox="0 0 1.3 2"><path d="M0 0v2L1.3 1z" fill="#333"/></svg>
<svg class="b" style="left:512px;top:47.4px;" width="7" height="2.4" viewBox="0 0 7 2.4"><path d="M0 1.2h6.4" stroke="#555" stroke-width="0.6" stroke-dasharray="1 0.6"/></svg>
<svg class="b" style="left:531.5px;top:40.5px;" width="9.5" height="10" viewBox="0 0 9.5 10"><path d="M1.4 1.4h6.6M1.4 4.2h6.6M2.6 0.6v9M6.8 0.6v9M1.4 7.2h6.6" fill="none" stroke="#444" stroke-width="0.7"/></svg>
<div class="b" style="left:542px;top:41.5px;width:35.5px;height:7.2px;background:#ffffff;box-shadow:inset 0 0 0 1px #c4c4c4;"></div>
<span class="t" style="left:544.00px;top:43.00px;font-size:5.0px;color:#333;transform:scaleX(0.883);">7130.6</span>
<div class="b" style="left:579.3px;top:31px;width:0.7px;height:21.5px;background:#d0d0d0;"></div>
<span class="t" style="left:581.00px;top:32.00px;font-size:4.4px;color:#4a4a4a;transform:scaleX(0.759);">断面サイズ:</span>
<div class="b" style="left:582px;top:39.5px;width:16.5px;height:11.5px;background:#dedede;box-shadow:inset 0 0 0 1px #cbcbcb;"></div>
<svg class="b" style="left:585.3px;top:42.0px;" width="6.4" height="6.4" viewBox="0 0 7 7"><rect x="0.6" y="0.9" width="5.2" height="4.6000000000000005" fill="none" stroke="#444" stroke-width="0.7"/></svg>
<svg class="b" style="left:594.6px;top:44.2px;" width="1.3" height="2" viewBox="0 0 1.3 2"><path d="M0 0v2L1.3 1z" fill="#333"/></svg>
<svg class="b" style="left:602px;top:40.2px;" width="11" height="10.6" viewBox="0 0 11 10.6"><rect x="1" y="0.8" width="6.6" height="6" fill="#fff" stroke="#444" stroke-width="0.7"/><path d="M1 8.8h6.6M1 8v1.6M7.6 8v1.6M9.4 0.8v6M8.6 0.8h1.6M8.6 6.8h1.6" stroke="#444" stroke-width="0.5" fill="none"/></svg>
<div class="b" style="left:615px;top:37.8px;width:25.5px;height:6.8px;background:#ffffff;box-shadow:inset 0 0 0 1px #c4c4c4;"></div>
<span class="t" style="left:617.00px;top:39.00px;font-size:5.0px;color:#222;transform:scaleX(0.879);">300.0</span>
<div class="b" style="left:615px;top:44.6px;width:25.5px;height:6.8px;background:#ffffff;box-shadow:inset 0 0 0 1px #c4c4c4;"></div>
<span class="t" style="left:617.00px;top:46.00px;font-size:5.0px;color:#222;transform:scaleX(0.879);">300.0</span>
<div class="b" style="left:642px;top:37.8px;width:6px;height:13.6px;background:#e6e6e6;box-shadow:inset 0 0 0 1px #bdbdbd;"></div>
<svg class="b" style="left:643.4px;top:39.6px;" width="3.4" height="10" viewBox="0 0 3.4 10"><rect x="0.5" y="0.5" width="2.2" height="3.4" rx="1" fill="none" stroke="#555" stroke-width="0.6"/><rect x="0.5" y="6" width="2.2" height="3.4" rx="1" fill="none" stroke="#555" stroke-width="0.6"/><path d="M1.6 3v4" stroke="#555" stroke-width="0.6"/></svg>
<div class="b" style="left:650.6px;top:31px;width:0.7px;height:21.5px;background:#d0d0d0;"></div>
<span class="t" style="left:653.00px;top:32.00px;font-size:4.4px;color:#4a4a4a;transform:scaleX(0.819);">軸の回転角:</span>
<svg class="b" style="left:656.5px;top:40.5px;" width="11.5" height="9.5" viewBox="0 0 11.5 9.5"><circle cx="3.6" cy="5.4" r="2.8" fill="none" stroke="#555" stroke-width="0.6"/><path d="M3.6 5.4L9.6 2.2M7 1.4l2.8 0.8-1.2 2.4" fill="none" stroke="#555" stroke-width="0.6"/></svg>
<div class="b" style="left:670px;top:41.5px;width:50.5px;height:7.2px;background:#ffffff;box-shadow:inset 0 0 0 1px #c4c4c4;"></div>
<span class="t" style="left:672.00px;top:43.00px;font-size:5.0px;color:#333;transform:scaleX(0.895);">0.00&#176;</span>
<div class="b" style="left:723.3px;top:31px;width:0.7px;height:21.5px;background:#d0d0d0;"></div>
<span class="t" style="left:725.00px;top:32.00px;font-size:4.4px;color:#4a4a4a;transform:scaleX(0.883);">基準軸のオフセット:</span>
<svg class="b" style="left:727.5px;top:40.5px;" width="8.5" height="10" viewBox="0 0 8.5 10"><rect x="1" y="0.8" width="4.6" height="6" fill="#fff" stroke="#555" stroke-width="0.6"/><path d="M3.4 0.4v2M5.6 3.4h2.4" stroke="#888" stroke-width="0.5"/><rect x="1.4" y="7.6" width="3.8" height="1.6" fill="#444"/></svg>
<div class="b" style="left:739px;top:41.5px;width:31.5px;height:7.2px;background:#ffffff;box-shadow:inset 0 0 0 1px #c4c4c4;"></div>
<span class="t" style="left:741.00px;top:43.00px;font-size:5.0px;color:#333;transform:scaleX(0.935);">0.0</span>
<svg class="b" style="left:776px;top:38.3px;" width="13.5" height="13.5" viewBox="0 0 13.5 13.5"><rect x="1.0" y="1.0" width="1.5" height="1.5" fill="#333"/><rect x="1.0" y="5.9" width="1.5" height="1.5" fill="#333"/><rect x="1.0" y="10.8" width="1.5" height="1.5" fill="#333"/><rect x="5.9" y="1.0" width="1.5" height="1.5" fill="#2f6fc0"/><rect x="5.9" y="10.8" width="1.5" height="1.5" fill="#333"/><rect x="10.8" y="1.0" width="1.5" height="1.5" fill="#333"/><rect x="10.8" y="5.9" width="1.5" height="1.5" fill="#333"/><rect x="10.8" y="10.8" width="1.5" height="1.5" fill="#333"/><path d="M6.6 5.6l-1.2 1.2 1.2 1.2z" fill="#444"/><path d="M4 1.7h5.4" stroke="#2f6fc0" stroke-width="0.6"/></svg>
<span class="t" style="left:797.00px;top:32.00px;font-size:4.4px;color:#222;font-weight:bold;">傾斜角度:</span>
<div class="b" style="left:797px;top:39.2px;width:17.5px;height:12.3px;background:#bcdaf2;box-shadow:inset 0 0 0 1px #b3d3ee;"></div>
<svg class="b" style="left:801.5px;top:43px;" width="9" height="5" viewBox="0 0 9 5"><rect x="0.6" y="0.8" width="7.6" height="3.4" fill="none" stroke="#3d6a9e" stroke-width="0.9"/></svg>
<svg class="b" style="left:817.5px;top:42.2px;" width="9.5" height="6.6" viewBox="0 0 9.5 6.6"><path d="M0.8 5.6V3.2L7.8 0.8v2.6z" fill="none" stroke="#666" stroke-width="0.7"/></svg>
<span class="t" style="left:833.50px;top:43.00px;font-size:5.0px;color:#a8a8a8;transform:scaleX(0.895);">0.00&#176;</span>
<div class="b" style="left:830px;top:48.8px;width:33px;height:0.6px;background:#e0e0e0;"></div>
<div class="b" style="left:866.3px;top:31px;width:0.7px;height:21.5px;background:#b8b8b8;"></div>
<span class="t" style="left:869.00px;top:32.00px;font-size:4.4px;color:#222;transform:scaleX(0.814);font-weight:bold;">曲線高度:</span>
<div class="b" style="left:869px;top:39.2px;width:17.5px;height:12.3px;background:#bcdaf2;box-shadow:inset 0 0 0 1px #b3d3ee;"></div>
<svg class="b" style="left:873.5px;top:43px;" width="9" height="5" viewBox="0 0 9 5"><rect x="0.6" y="0.8" width="7.6" height="3.4" fill="none" stroke="#3d6a9e" stroke-width="0.9"/></svg>
<svg class="b" style="left:890.5px;top:42.4px;" width="8.5" height="5.6" viewBox="0 0 8.5 5.6"><path d="M0.8 4.8V2.6C2.6 0.6 5.4 0.6 7.4 2.6v2.2M0.8 3.4h6.6" fill="none" stroke="#777" stroke-width="0.7"/></svg>
<span class="t" style="left:904.50px;top:43.00px;font-size:5.0px;color:#b0b0b0;transform:scaleX(0.935);">0.0</span>
<div class="b" style="left:901px;top:48.8px;width:35px;height:0.6px;background:#e0e0e0;"></div>
<span class="t" style="left:941.50px;top:32.00px;font-size:4.4px;color:#222;transform:scaleX(1.025);font-weight:bold;">梁端部:</span>
<div class="b" style="left:942px;top:39.5px;width:16.5px;height:11.5px;background:#e2e2e2;box-shadow:inset 0 0 0 1px #c6c6c6;"></div>
<svg class="b" style="left:945.25px;top:41.95px;" width="6.5" height="6.5" viewBox="0 0 7 7"><path d="M1 6l0.6-1.8L5.4 0.8l1 1L2.8 5.6z" fill="none" stroke="#666" stroke-width="0.7"/></svg>
<svg class="b" style="left:954.8px;top:44.2px;" width="1.3" height="2" viewBox="0 0 1.3 2"><path d="M0 0v2L1.3 1z" fill="#333"/></svg>
<svg class="b" style="left:963px;top:42.4px;" width="8" height="5.6" viewBox="0 0 8 5.6"><path d="M1 1l3 3M4 1L2.6 4.4" fill="none" stroke="#d8d8d8" stroke-width="0.7"/></svg>
<div class="b" style="left:974.5px;top:41.5px;width:24px;height:7.2px;background:#f4f4f4;box-shadow:inset 0 0 0 1px #dadada;"></div>
<span class="t" style="left:977.00px;top:43.00px;font-size:5.0px;color:#b4b4b4;transform:scaleX(0.896);">90.00&#176;</span>
<svg class="b" style="left:36.8px;top:55.3px;" width="6.4" height="6.4" viewBox="0 0 7 7"><path d="M2.2 0.6v5.8M4.8 0.6v5.8M0.6 2.2h5.8M0.6 4.8h5.8" fill="none" stroke="#555" stroke-width="0.6" stroke-dasharray="1.2 0.6"/></svg>
<svg class="b" style="left:45px;top:55.3px;" width="9" height="7" viewBox="0 0 9 7"><path d="M0.6 6.2V0.8h2.6l0.8 1h4.2v4.4z" fill="#fff" stroke="#6d96c8" stroke-width="0.6"/></svg>
<span class="t" style="left:56.00px;top:57.00px;font-size:4.4px;color:#222;transform:scaleX(0.920);">デフォルト [1. 1FL]</span>
<div class="b" style="left:161.8px;top:54.3px;width:117.6px;height:8.4px;background:#ffffff;"></div>
<svg class="b" style="left:164px;top:55.4px;" width="6.4" height="6.6" viewBox="0 0 6.4 6.6"><path d="M0.8 5.8V2.4L3.2 0.8l2.4 1.6v3.4z" fill="#fff" stroke="#4a82c8" stroke-width="0.7"/></svg>
<span class="t" style="left:170.50px;top:57.00px;font-size:4.4px;color:#333;transform:scaleX(1.112);">(!) パース [3D / 全て]</span>
<span class="t" style="left:272.80px;top:57.00px;font-size:5.0px;color:#555;">&#215;</span>
<svg class="b" style="left:281px;top:55.6px;" width="7" height="6.4" viewBox="0 0 7 6.4"><path d="M0.8 5.6V2.8L3.4 0.8 6 2.8v2.8z" fill="#fff" stroke="#666" stroke-width="0.6"/></svg>
<span class="t" style="left:288.00px;top:57.00px;font-size:5.0px;color:#222;transform:scaleX(1.012);">[E-01]</span>
<svg class="b" style="left:398.5px;top:55.6px;" width="6.4" height="6.4" viewBox="0 0 6.4 6.4"><rect x="0.6" y="0.6" width="5" height="5" fill="#fff" stroke="#888" stroke-width="0.6"/></svg>
<span class="t" style="left:405.00px;top:57.00px;font-size:4.4px;color:#222;transform:scaleX(1.093);">[1.2. 各種平面図]</span>
<svg class="b" style="left:908.5px;top:54.6px;" width="10.5" height="8" viewBox="0 0 10.5 8"><path d="M3.4 7V3.6L6.6 1.4l3 2.2V7z" fill="#dbe8f8" stroke="#3e78c4" stroke-width="0.8"/><path d="M0.8 4.6C1.2 2.6 2.6 2 3.6 2.6M0.6 2.8l0.2 1.9 1.8-0.5" fill="none" stroke="#3e78c4" stroke-width="0.7"/></svg>
<svg class="b" style="left:922.2px;top:57.34px;" width="2.2" height="1.4300000000000002" viewBox="0 0 2.2 1.4300000000000002"><path d="M0 0h2.2L1.1 1.4300000000000002z" fill="#333"/></svg>
<div class="b" style="left:0px;top:56.4px;width:16.6px;height:11.9px;background:#bcdaf2;"></div>
<svg class="b" style="left:6.2px;top:58.6px;" width="5.4" height="7.6" viewBox="0 0 5.4 7.6"><path d="M1 0.6v6l1.5-1.3 1 2.4 1-0.4-1-2.3h1.9z" fill="#1d2f4f" stroke="#2b4a80" stroke-width="0.3"/></svg>
<svg class="b" style="left:21.5px;top:58.6px;" width="9" height="8" viewBox="0 0 9 8"><rect x="0.8" y="0.8" width="7.2" height="6" fill="none" stroke="#666" stroke-width="0.6" stroke-dasharray="1.2 0.8"/></svg>
<div class="b" style="left:0px;top:71px;width:34.6px;height:6.6px;background:#dbdbdb;"></div>
<svg class="b" style="left:3.2px;top:73.4px;" width="2.6" height="2" viewBox="0 0 2.6 2"><path d="M0 0h2.6L1.3 1.8z" fill="#444"/></svg>
<span class="t" style="left:8.60px;top:73.00px;font-size:4.4px;color:#222;transform:scaleX(0.825);">デザイン</span>
<div class="b" style="left:0px;top:209.6px;width:34.6px;height:6.6px;background:#dbdbdb;"></div>
<svg class="b" style="left:3.2px;top:212.0px;" width="2.6" height="2" viewBox="0 0 2.6 2"><path d="M0 0h2.6L1.3 1.8z" fill="#444"/></svg>
<span class="t" style="left:8.60px;top:212.00px;font-size:4.4px;color:#222;transform:scaleX(0.732);">ビューポイント</span>
<div class="b" style="left:0px;top:255.2px;width:34.6px;height:6.6px;background:#dbdbdb;"></div>
<svg class="b" style="left:3.2px;top:257.59999999999997px;" width="2.6" height="2" viewBox="0 0 2.6 2"><path d="M0 0h2.6L1.3 1.8z" fill="#444"/></svg>
<span class="t" style="left:8.60px;top:257.00px;font-size:4.4px;color:#222;transform:scaleX(0.759);">ドキュメント</span>
<svg class="b" style="left:4.2px;top:80.6px;" width="8.8" height="8.8" viewBox="0 0 8.8 8.8"><path d="M1 2.2l7-1.2v5.2l-7 1.6z" fill="none" stroke="#505050" stroke-width="0.75"/></svg>
<svg class="b" style="left:21.8px;top:80.6px;" width="8.8" height="8.8" viewBox="0 0 8.8 8.8"><path d="M3.4 0.8h2.4v7.4H3.4z" fill="none" stroke="#505050" stroke-width="0.75"/></svg>
<svg class="b" style="left:4.2px;top:92.0px;" width="8.8" height="8.8" viewBox="0 0 8.8 8.8"><path d="M0.8 2.6l6 2.6 1.4-0.8v2l-1.4 0.8-6-2.6z" fill="none" stroke="#505050" stroke-width="0.75"/></svg>
<svg class="b" style="left:21.8px;top:92.0px;" width="8.8" height="8.8" viewBox="0 0 8.8 8.8"><path d="M0.8 5l3.4-3h4L5 5.8z" fill="none" stroke="#505050" stroke-width="0.75"/></svg>
<svg class="b" style="left:4.2px;top:103.4px;" width="8.8" height="8.8" viewBox="0 0 8.8 8.8"><path d="M0.8 5.6L3.4 1.6h3.2l1.8 4-2.2 1.6z" fill="none" stroke="#505050" stroke-width="0.75"/></svg>
<svg class="b" style="left:21.8px;top:103.4px;" width="8.8" height="8.8" viewBox="0 0 8.8 8.8"><path d="M0.8 2.4l3.6 3.4L8.2 1.4v5.4L4.4 8 0.8 6.2z" fill="none" stroke="#505050" stroke-width="0.75"/></svg>
<svg class="b" style="left:4.2px;top:115.0px;" width="8.8" height="8.8" viewBox="0 0 8.8 8.8"><path d="M1 1.6l6 5.4M1 3l5 4.4M2.4 1.4l5.6 5M1 1.6h1.6M7 7h1.2" fill="none" stroke="#505050" stroke-width="0.75"/></svg>
<svg class="b" style="left:21.8px;top:115.0px;" width="8.8" height="8.8" viewBox="0 0 8.8 8.8"><path d="M0.8 6.2l7-3M1.6 5.8V3.8M3.6 5V3M5.6 4.2V2.2M7.4 3.4V1.6M0.8 4.2l7-3" fill="none" stroke="#505050" stroke-width="0.6"/></svg>
<svg class="b" style="left:4.2px;top:126.6px;" width="8.8" height="8.8" viewBox="0 0 8.8 8.8"><path d="M1 1.2h7v6.6H1zM1 4.4h7M4.4 1.2v6.6" fill="none" stroke="#505050" stroke-width="0.75"/></svg>
<svg class="b" style="left:21.8px;top:126.6px;" width="8.8" height="8.8" viewBox="0 0 8.8 8.8"><path d="M3 0.8h3v7.4H3zM5 4.6v0.8" fill="none" stroke="#505050" stroke-width="0.75"/></svg>
<svg class="b" style="left:4.2px;top:138.6px;" width="8.8" height="8.8" viewBox="0 0 8.8 8.8"><path d="M1.4 1.4h6v6h-6zM1.4 4.4h6M4.4 1.4v6" fill="none" stroke="#505050" stroke-width="0.65"/></svg>
<svg class="b" style="left:21.8px;top:138.6px;" width="8.8" height="8.8" viewBox="0 0 8.8 8.8"><path d="M0.8 3.4l5 3.4 2.4-1.4-5-3.4zM2.6 3.6l3 2" fill="none" stroke="#505050" stroke-width="0.75"/></svg>
<svg class="b" style="left:4.2px;top:150.2px;" width="8.8" height="8.8" viewBox="0 0 8.8 8.8"><path d="M1.4 2h6v4.4h-6zM3 7.6h3" fill="none" stroke="#505050" stroke-width="0.75"/></svg>
<svg class="b" style="left:21.8px;top:150.2px;" width="8.8" height="8.8" viewBox="0 0 8.8 8.8"><path d="M1 1h4.4v6.6H1zM5.4 3.4h2.8v4.2H5.4M6.4 5v1.2" fill="none" stroke="#505050" stroke-width="0.75"/></svg>
<svg class="b" style="left:4.2px;top:162.0px;" width="8.8" height="8.8" viewBox="0 0 8.8 8.8"><path d="M0.6 2.6l5.8 3.2 1.8-1v1.6l-1.8 1-5.8-3.2z" fill="none" stroke="#505050" stroke-width="0.75"/></svg>
<svg class="b" style="left:21.8px;top:162.0px;" width="8.8" height="8.8" viewBox="0 0 8.8 8.8"><path d="M2.6 2.6L5.8 1l1.6 1v4.4L4.2 8 2.6 7z" fill="none" stroke="#505050" stroke-width="0.75"/></svg>
<svg class="b" style="left:4.2px;top:173.6px;" width="8.8" height="8.8" viewBox="0 0 8.8 8.8"><path d="M4.4 0.8v2.4M3 3.2h2.8L6.6 5H2.2zM4.4 5v3M3 8h2.8" fill="none" stroke="#505050" stroke-width="0.65"/></svg>
<svg class="b" style="left:21.8px;top:173.6px;" width="8.8" height="8.8" viewBox="0 0 8.8 8.8"><path d="M1.4 1l3 3.4 3-3.4M2.4 7.6l2-3.2 2 3.2M1.4 4.4h6" fill="none" stroke="#505050" stroke-width="0.6"/></svg>
<svg class="b" style="left:4.2px;top:185.2px;" width="8.8" height="8.8" viewBox="0 0 8.8 8.8"><path d="M3 1.4h2.8v2H3zM2.4 3.4h4v4.4h-4zM2.4 5.6h4" fill="none" stroke="#505050" stroke-width="0.75"/></svg>
<svg class="b" style="left:21.8px;top:185.2px;" width="8.8" height="8.8" viewBox="0 0 8.8 8.8"><path d="M1 2h7.2v5H1zM3.4 2v5M5.8 2v5M1 4.4h7.2" fill="none" stroke="#505050" stroke-width="0.65"/></svg>
<svg class="b" style="left:4.2px;top:196.6px;" width="8.8" height="8.8" viewBox="0 0 8.8 8.8"><path d="M1.4 1.4l2.2-0.6v6.6l-2.2 0.8zM3.6 0.8h2.8v5.2" fill="none" stroke="#505050" stroke-width="0.75"/></svg>
<svg class="b" style="left:4.2px;top:219.6px;" width="8.8" height="8.8" viewBox="0 0 8.8 8.8"><path d="M0.8 3.6h2M6 5.6h2.4M2.8 3.6l3.2 2" fill="none" stroke="#a2a2a2" stroke-width="0.75"/><circle cx="1.4" cy="3.6" r="0.8" fill="#a2a2a2"/><circle cx="7.6" cy="5.6" r="0.8" fill="#a2a2a2"/></svg>
<svg class="b" style="left:21.8px;top:219.6px;" width="8.8" height="8.8" viewBox="0 0 8.8 8.8"><path d="M1.4 5.8h6.4M4.6 5.6L5.4 3.6l0.8 2" fill="none" stroke="#a2a2a2" stroke-width="0.75"/></svg>
<svg class="b" style="left:4.2px;top:231.2px;" width="8.8" height="8.8" viewBox="0 0 8.8 8.8"><path d="M4.4 0.8v7.6M0.8 4.6h7.2" fill="none" stroke="#a2a2a2" stroke-width="0.6"/><circle cx="4.4" cy="4.6" r="1.4" fill="none" stroke="#a2a2a2" stroke-width="0.6"/></svg>
<svg class="b" style="left:21.8px;top:231.2px;" width="8.8" height="8.8" viewBox="0 0 8.8 8.8"><circle cx="4.4" cy="4.4" r="3" fill="none" stroke="#a2a2a2" stroke-width="0.6"/><circle cx="4.4" cy="4.4" r="1.2" fill="none" stroke="#a2a2a2" stroke-width="0.6"/></svg>
<svg class="b" style="left:4.2px;top:242.4px;" width="8.8" height="8.8" viewBox="0 0 8.8 8.8"><path d="M1 2h4.6l2 2v3.4H1zM1 4.6h4M5.6 2v2h2" fill="none" stroke="#a2a2a2" stroke-width="0.65"/></svg>
<svg class="b" style="left:21.8px;top:242.4px;" width="8.8" height="8.8" viewBox="0 0 8.8 8.8"><path d="M1.4 1.8h5.6v4H1.4zM3 5.8l-1 2M5.6 5.8l1 2" fill="none" stroke="#b4b4b4" stroke-width="0.65"/></svg>
<svg class="b" style="left:4.2px;top:264.4px;" width="8.8" height="8.8" viewBox="0 0 8.8 8.8"><path d="M0.8 3.6h7.4M0.8 5.8h7.4" fill="none" stroke="#b0b0b0" stroke-width="0.6" stroke-dasharray="1.4 0.8"/></svg>
<svg class="b" style="left:21.8px;top:264.4px;" width="8.8" height="8.8" viewBox="0 0 8.8 8.8"><path d="M1 4.4h7M2.4 2.6h5M3.4 6.2h4" fill="none" stroke="#b0b0b0" stroke-width="0.6"/><circle cx="5" cy="4.4" r="2.6" fill="none" stroke="#b0b0b0" stroke-width="0.5"/></svg>
<svg class="b" style="left:4.2px;top:275.8px;" width="8.8" height="8.8" viewBox="0 0 8.8 8.8"><path d="M1.4 7.4L7 2M1.4 7.4V5.6M1.4 7.4h1.8" fill="none" stroke="#777" stroke-width="0.65"/><circle cx="7.2" cy="1.8" r="0.8" fill="#777"/></svg>
<svg class="b" style="left:21.8px;top:275.8px;" width="8.8" height="8.8" viewBox="0 0 8.8 8.8"><path d="M1 7.4h7.2M1 7.4L6.4 2" fill="none" stroke="#777" stroke-width="0.65"/><path d="M5 7.4C5 6 4.6 5 3.8 4.6" fill="none" stroke="#777" stroke-width="0.5"/><circle cx="7.6" cy="2.4" r="0.7" fill="#777"/></svg>
<svg class="b" style="left:4.2px;top:287.6px;" width="8.8" height="8.8" viewBox="0 0 8.8 8.8"><path d="M1.2 8L4.4 0.8 7.6 8M2.4 5.4h4" fill="none" stroke="#999" stroke-width="0.7"/></svg>
<svg class="b" style="left:21.8px;top:287.6px;" width="8.8" height="8.8" viewBox="0 0 8.8 8.8"><path d="M1 7.6L5 3.4h3" fill="none" stroke="#999" stroke-width="0.6"/><path d="M5.4 1.6l1 1.4 1-1.4" fill="none" stroke="#999" stroke-width="0.5"/></svg>
<svg class="b" style="left:4.2px;top:299.6px;" width="8.8" height="8.8" viewBox="0 0 8.8 8.8"><circle cx="4.4" cy="3" r="2.2" fill="none" stroke="#555" stroke-width="0.8"/><path d="M4.4 5.2v3.2M3.6 3h1.6" fill="none" stroke="#555" stroke-width="0.7"/></svg>
<svg class="b" style="left:21.8px;top:299.6px;" width="8.8" height="8.8" viewBox="0 0 8.8 8.8"><circle cx="4.4" cy="4.4" r="3.2" fill="none" stroke="#555" stroke-width="0.65"/><path d="M1.2 4.4h6.4M1.8 2.6h5.2M1.8 6.2h5.2" fill="none" stroke="#555" stroke-width="0.5"/></svg>
<svg class="b" style="left:4.2px;top:311.0px;" width="8.8" height="8.8" viewBox="0 0 8.8 8.8"><path d="M0.8 7.2L2.6 3.2h4.2l1.4 4z" fill="none" stroke="#888" stroke-width="0.65"/><path d="M1.8 5.8h5.6M2.4 4.4h4.6" stroke="#888" stroke-width="0.5"/></svg>
<svg class="b" style="left:21.8px;top:311.0px;" width="8.8" height="8.8" viewBox="0 0 8.8 8.8"><path d="M1 7.6L8 1.4" fill="none" stroke="#888" stroke-width="0.7"/></svg>
<svg class="b" style="left:4.2px;top:323.0px;" width="8.8" height="8.8" viewBox="0 0 8.8 8.8"><circle cx="4.4" cy="4.4" r="3.2" fill="none" stroke="#b8b8b8" stroke-width="0.7"/></svg>
<svg class="b" style="left:21.8px;top:323.0px;" width="8.8" height="8.8" viewBox="0 0 8.8 8.8"><path d="M7.6 1.4H5A3.4 3.4 0 0 0 1.6 4.8v2.6" fill="none" stroke="#b8b8b8" stroke-width="0.8"/></svg>
<svg class="b" style="left:4.2px;top:334.4px;" width="8.8" height="8.8" viewBox="0 0 8.8 8.8"><path d="M0.8 7C2 1.4 4 1.4 4.4 4.6S6.6 7.6 8 4" fill="none" stroke="#b8b8b8" stroke-width="0.65"/></svg>
<svg class="b" style="left:21.8px;top:334.4px;" width="8.8" height="8.8" viewBox="0 0 8.8 8.8"><path d="M2.4 2.4l4 4M6.4 2.4l-4 4" fill="none" stroke="#b8b8b8" stroke-width="0.8"/></svg>
<svg class="b" style="left:4.2px;top:346.2px;" width="8.8" height="8.8" viewBox="0 0 8.8 8.8"><path d="M1.4 1.4h4.4v6.4H1.4zM0.8 7.8h6" fill="none" stroke="#aaa" stroke-width="0.65"/><path d="M2.4 3h2.4M2.4 4.6h2.4" stroke="#aaa" stroke-width="0.5"/></svg>
<svg class="b" style="left:21.8px;top:346.2px;" width="8.8" height="8.8" viewBox="0 0 8.8 8.8"><path d="M1 7.6V3.4l2-2h2.6l2 2v4.2zM3 3.4h3M3.8 1.6v1.8" fill="none" stroke="#aaa" stroke-width="0.65"/></svg>
<div class="b" style="left:926.4px;top:54px;width:0.7px;height:461px;background:#d6d6d6;"></div>
<div class="b" style="left:927.2px;top:69.4px;width:64px;height:321.4px;background:#ffffff;"></div>
<div class="b" style="left:991.2px;top:69.4px;width:6.8px;height:321.4px;background:#f1f1f1;"></div>
<div class="b" style="left:992.2px;top:125px;width:5.8px;height:203px;background:#cdcdcd;"></div>
<svg class="b" style="left:992.6px;top:72.6px;" width="4.6" height="3" viewBox="0 0 4.6 3"><path d="M0.5 2.6L2.3 0.6l1.8 2" fill="none" stroke="#555" stroke-width="0.6"/></svg>
<svg class="b" style="left:992.6px;top:385.4px;" width="4.6" height="3" viewBox="0 0 4.6 3"><path d="M0.5 0.4l1.8 2 1.8-2" fill="none" stroke="#555" stroke-width="0.6"/></svg>
<div class="b" style="left:928.4px;top:57.6px;width:15px;height:10px;background:#e2e2e2;box-shadow:inset 0 0 0 1px #cfcfcf;"></div>
<svg class="b" style="left:932.6px;top:58.8px;" width="6" height="7.4" viewBox="0 0 6 7.4"><path d="M1 6.8V3.4L3 1.6l2 1.8v3.4zM2.4 0.6h1.4" fill="none" stroke="#666" stroke-width="0.6"/><path d="M1.8 5h2.4" stroke="#2f8a3a" stroke-width="0.7"/></svg>
<svg class="b" style="left:940px;top:62.0px;" width="2" height="1.3" viewBox="0 0 2 1.3"><path d="M0 0h2L1 1.3z" fill="#333"/></svg>
<div class="b" style="left:950.6px;top:56.8px;width:12.4px;height:11.4px;background:#bcdaf2;box-shadow:inset 0 0 0 1px #a6cbe8;"></div>
<svg class="b" style="left:952.6px;top:58.4px;" width="8.5" height="8" viewBox="0 0 8.5 8"><path d="M1 7V3.6L4.2 1.2l3.2 2.4V7z" fill="#eaf2fb" stroke="#3e78c4" stroke-width="0.8"/></svg>
<svg class="b" style="left:965.6px;top:58.6px;" width="8" height="7.6" viewBox="0 0 8 7.6"><path d="M0.8 6.8V1h2.2l0.8 1.2h3.2v4.6z" fill="#fff" stroke="#888" stroke-width="0.6"/><path d="M0.8 2.2h2.8" stroke="#d9a441" stroke-width="0.7"/></svg>
<svg class="b" style="left:976.6px;top:58.4px;" width="8.6" height="8" viewBox="0 0 8.6 8"><path d="M1 3.4h2V1.6h4v5H5v0.8H1z" fill="#fff" stroke="#555" stroke-width="0.7"/><path d="M5 3.4v3.2" stroke="#555" stroke-width="0.6"/></svg>
<svg class="b" style="left:987.6px;top:58.4px;" width="8" height="8" viewBox="0 0 8 8"><rect x="1.4" y="0.8" width="4.6" height="6.4" rx="0.8" fill="#e9e9e9" stroke="#444" stroke-width="0.9"/><path d="M2.6 2.6h2.2M2.6 4.2h2.2" stroke="#777" stroke-width="0.5"/></svg>
<svg class="b" style="left:933.4px;top:73.5px;" width="3.6" height="2.6" viewBox="0 0 3.6 2.6"><path d="M0.4 0.5L1.8 2l1.4-1.5" fill="none" stroke="#555" stroke-width="0.6"/></svg>
<svg class="b" style="left:938.8px;top:71.1px;" width="6.8" height="6.8" viewBox="0 0 6.8 6.8"><path d="M0.8 5.4V3L3.2 1l2.6 2v2.4z" fill="#fff" stroke="#4a4a4a" stroke-width="0.6"/></svg>
<span class="t" style="left:946.60px;top:73.00px;font-size:4.4px;color:#151515;transform:scaleX(0.948);font-weight:500;">立面図</span>
<svg class="b" style="left:942.6px;top:79.7px;" width="6.8" height="6.8" viewBox="0 0 6.8 6.8"><path d="M0.8 5.4V3L3.2 1l2.6 2v2.4z" fill="#fff" stroke="#4a4a4a" stroke-width="0.6"/></svg>
<span class="t" style="left:950.40px;top:82.00px;font-size:4.4px;color:#151515;transform:scaleX(1.044);font-weight:500;">E-01 (自動再構築モ</span>
<svg class="b" style="left:942.6px;top:88.2px;" width="6.8" height="6.8" viewBox="0 0 6.8 6.8"><path d="M0.8 5.4V3L3.2 1l2.6 2v2.4z" fill="#fff" stroke="#4a4a4a" stroke-width="0.6"/></svg>
<span class="t" style="left:950.40px;top:90.00px;font-size:4.4px;color:#151515;transform:scaleX(1.044);font-weight:500;">E-02 (自動再構築モ</span>
<svg class="b" style="left:942.6px;top:96.8px;" width="6.8" height="6.8" viewBox="0 0 6.8 6.8"><path d="M0.8 5.4V3L3.2 1l2.6 2v2.4z" fill="#fff" stroke="#4a4a4a" stroke-width="0.6"/></svg>
<span class="t" style="left:950.40px;top:99.00px;font-size:4.4px;color:#151515;transform:scaleX(1.044);font-weight:500;">E-03 (自動再構築モ</span>
<svg class="b" style="left:942.6px;top:105.3px;" width="6.8" height="6.8" viewBox="0 0 6.8 6.8"><path d="M0.8 5.4V3L3.2 1l2.6 2v2.4z" fill="#fff" stroke="#4a4a4a" stroke-width="0.6"/></svg>
<span class="t" style="left:950.40px;top:107.00px;font-size:4.4px;color:#151515;transform:scaleX(1.044);font-weight:500;">E-04 (自動再構築モ</span>
<svg class="b" style="left:938.8px;top:113.9px;" width="6.8" height="6.8" viewBox="0 0 6.8 6.8"><rect x="0.6" y="1" width="5.4" height="4.6" fill="#fff" stroke="#4a4a4a" stroke-width="0.6"/><path d="M0.6 3.4h3M3.6 2.2v3.4" stroke="#4a4a4a" stroke-width="0.5"/></svg>
<span class="t" style="left:946.60px;top:116.00px;font-size:4.4px;color:#151515;transform:scaleX(0.948);font-weight:500;">展開図</span>
<svg class="b" style="left:938.8px;top:122.4px;" width="6.8" height="6.8" viewBox="0 0 6.8 6.8"><rect x="0.6" y="1" width="5.4" height="4.6" fill="#fff" stroke="#4a4a4a" stroke-width="0.6"/><path d="M1.6 4.6l1.4-1.8 1 1 1-1.4" fill="none" stroke="#4a4a4a" stroke-width="0.5"/></svg>
<span class="t" style="left:946.60px;top:125.00px;font-size:4.4px;color:#444;transform:scaleX(0.721);font-weight:500;">ワークシート</span>
<svg class="b" style="left:938.8px;top:131.0px;" width="6.8" height="6.8" viewBox="0 0 6.8 6.8"><circle cx="3.3" cy="3.3" r="2.6" fill="#fff" stroke="#4a4a4a" stroke-width="0.7"/><path d="M2 2.4h2.6v2H2z" fill="none" stroke="#4a4a4a" stroke-width="0.5"/></svg>
<span class="t" style="left:946.60px;top:133.00px;font-size:4.4px;color:#151515;transform:scaleX(0.948);font-weight:500;">詳細図</span>
<svg class="b" style="left:934.0px;top:141.4px;" width="2.6" height="3.6" viewBox="0 0 2.6 3.6"><path d="M0.5 0.4L2 1.8 0.5 3.2" fill="none" stroke="#aaa" stroke-width="0.5"/></svg>
<svg class="b" style="left:938.8px;top:139.5px;" width="6.8" height="6.8" viewBox="0 0 6.8 6.8"><rect x="0.6" y="1.2" width="5.2" height="4.2" fill="#fff" stroke="#4a4a4a" stroke-width="0.7"/><path d="M1.8 4.4h2.8M4.6 1.2V0.4h1.8v3.4" fill="none" stroke="#4a4a4a" stroke-width="0.5"/></svg>
<span class="t" style="left:946.60px;top:142.00px;font-size:4.4px;color:#555;transform:scaleX(0.813);font-weight:500;">3Dドキュメント</span>
<svg class="b" style="left:933.4px;top:150.5px;" width="3.6" height="2.6" viewBox="0 0 3.6 2.6"><path d="M0.4 0.5L1.8 2l1.4-1.5" fill="none" stroke="#555" stroke-width="0.6"/></svg>
<svg class="b" style="left:938.8px;top:148.1px;" width="6.8" height="6.8" viewBox="0 0 6.8 6.8"><circle cx="3.3" cy="3.3" r="2.7" fill="#fff" stroke="#4a4a4a" stroke-width="0.7"/><path d="M3.3 0.6v5.4" stroke="#4a4a4a" stroke-width="0.5"/></svg>
<span class="t" style="left:946.60px;top:150.00px;font-size:5.0px;color:#151515;transform:scaleX(0.859);font-weight:500;">3D</span>
<div class="b" style="left:927.2px;top:156.05px;width:64px;height:8.4px;background:#d3d3d3;"></div>
<svg class="b" style="left:942.6px;top:156.6px;" width="6.8" height="6.8" viewBox="0 0 6.8 6.8"><path d="M0.8 1.2h2.6c1.6 0 2.6 0.8 2.6 2.1S5 5.6 3.4 5.6H0.8z" fill="#fff" stroke="#4a4a4a" stroke-width="0.7"/></svg>
<span class="t" style="left:950.40px;top:159.00px;font-size:4.4px;color:#151515;transform:scaleX(0.965);font-weight:500;">パース</span>
<svg class="b" style="left:942.6px;top:165.2px;" width="6.8" height="6.8" viewBox="0 0 6.8 6.8"><path d="M0.8 2.4L3.4 1l2.4 1.2v3L3.2 6.4 0.8 5.2zM0.8 2.4l2.4 1.2 2.6-1.4M3.2 3.6v2.8" fill="#fff" stroke="#4a4a4a" stroke-width="0.5"/></svg>
<span class="t" style="left:950.40px;top:167.00px;font-size:4.4px;color:#444;transform:scaleX(0.910);font-weight:500;">平行投影</span>
<svg class="b" style="left:934.4px;top:175.7px;" width="2.6" height="3.6" viewBox="0 0 2.6 3.6"><path d="M0.5 0.4L2 1.8 0.5 3.2" fill="none" stroke="#aaa" stroke-width="0.5"/></svg>
<svg class="b" style="left:942.6px;top:173.8px;" width="6.8" height="6.8" viewBox="0 0 6.8 6.8"><path d="M0.8 2.4h3.4v3H0.8zM4.2 3.4l1.8-1v3l-1.8-1" fill="#fff" stroke="#4a4a4a" stroke-width="0.6"/></svg>
<span class="t" style="left:950.40px;top:176.00px;font-size:4.4px;color:#555;transform:scaleX(0.856);font-weight:500;">00 カメラ</span>
<svg class="b" style="left:933.4px;top:184.7px;" width="3.6" height="2.6" viewBox="0 0 3.6 2.6"><path d="M0.4 0.5L1.8 2l1.4-1.5" fill="none" stroke="#555" stroke-width="0.6"/></svg>
<svg class="b" style="left:938.8px;top:182.3px;" width="6.8" height="6.8" viewBox="0 0 6.8 6.8"><rect x="1" y="0.5" width="4.2" height="5.8" fill="#fff" stroke="#4a4a4a" stroke-width="0.7"/><path d="M1 2.2h4.2M1 3.8h4.2" stroke="#4a4a4a" stroke-width="0.5"/></svg>
<span class="t" style="left:946.60px;top:184.00px;font-size:4.4px;color:#151515;transform:scaleX(0.948);font-weight:500;">一覧表</span>
<svg class="b" style="left:933.8px;top:193.3px;" width="3.6" height="2.6" viewBox="0 0 3.6 2.6"><path d="M0.4 0.5L1.8 2l1.4-1.5" fill="none" stroke="#555" stroke-width="0.6"/></svg>
<svg class="b" style="left:942.6px;top:190.9px;" width="6.8" height="6.8" viewBox="0 0 6.8 6.8"><path d="M0.6 2.6h5.6M0.6 3.6h5.6" stroke="#4a4a4a" stroke-width="0.6" stroke-dasharray="1 0.5"/></svg>
<span class="t" style="left:950.40px;top:193.00px;font-size:4.4px;color:#151515;transform:scaleX(0.966);font-weight:500;">要素</span>
<svg class="b" style="left:946.4px;top:199.4px;" width="6.8" height="6.8" viewBox="0 0 6.8 6.8"><rect x="0.8" y="0.5" width="4.8" height="6" fill="#fff" stroke="#555" stroke-width="0.7"/><path d="M0.8 2.2h4.8M0.8 3.6h4.8M0.8 5h4.8M2.6 0.5v6" stroke="#555" stroke-width="0.5"/></svg>
<span class="t" style="left:954.60px;top:202.00px;font-size:4.4px;color:#151515;transform:scaleX(0.936);font-weight:500;">3DDoc開口情報</span>
<svg class="b" style="left:946.4px;top:208.0px;" width="6.8" height="6.8" viewBox="0 0 6.8 6.8"><rect x="0.8" y="0.5" width="4.8" height="6" fill="#fff" stroke="#555" stroke-width="0.7"/><path d="M0.8 2.2h4.8M0.8 3.6h4.8M0.8 5h4.8M2.6 0.5v6" stroke="#555" stroke-width="0.5"/></svg>
<span class="t" style="left:954.60px;top:210.00px;font-size:4.4px;color:#444;transform:scaleX(0.683);font-weight:500;">オブジェクトリスト</span>
<svg class="b" style="left:946.4px;top:216.5px;" width="6.8" height="6.8" viewBox="0 0 6.8 6.8"><rect x="0.8" y="0.5" width="4.8" height="6" fill="#fff" stroke="#555" stroke-width="0.7"/><path d="M0.8 2.2h4.8M0.8 3.6h4.8M0.8 5h4.8M2.6 0.5v6" stroke="#555" stroke-width="0.5"/></svg>
<span class="t" style="left:954.60px;top:219.00px;font-size:4.4px;color:#151515;transform:scaleX(0.911);font-weight:500;">建具表（ドア）</span>
<svg class="b" style="left:946.4px;top:225.1px;" width="6.8" height="6.8" viewBox="0 0 6.8 6.8"><rect x="0.8" y="0.5" width="4.8" height="6" fill="#fff" stroke="#555" stroke-width="0.7"/><path d="M0.8 2.2h4.8M0.8 3.6h4.8M0.8 5h4.8M2.6 0.5v6" stroke="#555" stroke-width="0.5"/></svg>
<span class="t" style="left:954.60px;top:227.00px;font-size:4.4px;color:#151515;transform:scaleX(0.958);font-weight:500;">建具表（ドア）_連</span>
<svg class="b" style="left:946.4px;top:233.6px;" width="6.8" height="6.8" viewBox="0 0 6.8 6.8"><rect x="0.8" y="0.5" width="4.8" height="6" fill="#fff" stroke="#555" stroke-width="0.7"/><path d="M0.8 2.2h4.8M0.8 3.6h4.8M0.8 5h4.8M2.6 0.5v6" stroke="#555" stroke-width="0.5"/></svg>
<span class="t" style="left:954.60px;top:236.00px;font-size:4.4px;color:#151515;transform:scaleX(0.986);font-weight:500;">建具表（窓）</span>
<svg class="b" style="left:946.4px;top:242.2px;" width="6.8" height="6.8" viewBox="0 0 6.8 6.8"><rect x="0.8" y="0.5" width="4.8" height="6" fill="#fff" stroke="#555" stroke-width="0.7"/><path d="M0.8 2.2h4.8M0.8 3.6h4.8M0.8 5h4.8M2.6 0.5v6" stroke="#555" stroke-width="0.5"/></svg>
<span class="t" style="left:954.60px;top:244.00px;font-size:4.4px;color:#151515;transform:scaleX(1.085);font-weight:500;">建具表（窓）_簡</span>
<svg class="b" style="left:946.4px;top:250.8px;" width="6.8" height="6.8" viewBox="0 0 6.8 6.8"><rect x="0.8" y="0.5" width="4.8" height="6" fill="#fff" stroke="#555" stroke-width="0.7"/><path d="M0.8 2.2h4.8M0.8 3.6h4.8M0.8 5h4.8M2.6 0.5v6" stroke="#555" stroke-width="0.5"/></svg>
<span class="t" style="left:954.60px;top:253.00px;font-size:4.4px;color:#444;transform:scaleX(1.047);font-weight:500;">内部仕上表</span>
<svg class="b" style="left:946.4px;top:259.3px;" width="6.8" height="6.8" viewBox="0 0 6.8 6.8"><rect x="0.8" y="0.5" width="4.8" height="6" fill="#fff" stroke="#555" stroke-width="0.7"/><path d="M0.8 2.2h4.8M0.8 3.6h4.8M0.8 5h4.8M2.6 0.5v6" stroke="#555" stroke-width="0.5"/></svg>
<span class="t" style="left:954.60px;top:261.00px;font-size:4.4px;color:#444;transform:scaleX(0.626);font-weight:500;">壁リスト</span>
<svg class="b" style="left:946.4px;top:267.9px;" width="6.8" height="6.8" viewBox="0 0 6.8 6.8"><rect x="0.8" y="0.5" width="4.8" height="6" fill="#fff" stroke="#555" stroke-width="0.7"/><path d="M0.8 2.2h4.8M0.8 3.6h4.8M0.8 5h4.8M2.6 0.5v6" stroke="#555" stroke-width="0.5"/></svg>
<span class="t" style="left:954.60px;top:270.00px;font-size:4.4px;color:#151515;transform:scaleX(0.758);font-weight:500;">家具表</span>
<svg class="b" style="left:933.8px;top:278.8px;" width="3.6" height="2.6" viewBox="0 0 3.6 2.6"><path d="M0.4 0.5L1.8 2l1.4-1.5" fill="none" stroke="#555" stroke-width="0.6"/></svg>
<svg class="b" style="left:942.6px;top:276.4px;" width="6.8" height="6.8" viewBox="0 0 6.8 6.8"><path d="M0.6 5.2L3.2 1l2.8 4.2zM1.6 3.8h3.4" fill="none" stroke="#4a4a4a" stroke-width="0.6"/></svg>
<span class="t" style="left:950.40px;top:279.00px;font-size:4.4px;color:#151515;transform:scaleX(0.882);font-weight:500;">構成要素</span>
<svg class="b" style="left:946.4px;top:285.0px;" width="6.8" height="6.8" viewBox="0 0 6.8 6.8"><rect x="0.8" y="0.5" width="4.8" height="6" fill="#fff" stroke="#555" stroke-width="0.7"/><path d="M0.8 2.2h4.8M0.8 3.6h4.8M0.8 5h4.8M2.6 0.5v6" stroke="#555" stroke-width="0.5"/></svg>
<span class="t" style="left:954.60px;top:287.00px;font-size:4.4px;color:#444;transform:scaleX(0.914);font-weight:500;">レイヤー別構成要素</span>
<svg class="b" style="left:946.4px;top:293.5px;" width="6.8" height="6.8" viewBox="0 0 6.8 6.8"><rect x="0.8" y="0.5" width="4.8" height="6" fill="#fff" stroke="#555" stroke-width="0.7"/><path d="M0.8 2.2h4.8M0.8 3.6h4.8M0.8 5h4.8M2.6 0.5v6" stroke="#555" stroke-width="0.5"/></svg>
<span class="t" style="left:954.60px;top:296.00px;font-size:4.4px;color:#151515;transform:scaleX(0.825);font-weight:500;">各階一覧</span>
<svg class="b" style="left:946.4px;top:302.1px;" width="6.8" height="6.8" viewBox="0 0 6.8 6.8"><rect x="0.8" y="0.5" width="4.8" height="6" fill="#fff" stroke="#555" stroke-width="0.7"/><path d="M0.8 2.2h4.8M0.8 3.6h4.8M0.8 5h4.8M2.6 0.5v6" stroke="#555" stroke-width="0.5"/></svg>
<span class="t" style="left:954.60px;top:304.00px;font-size:4.4px;color:#151515;transform:scaleX(0.976);font-weight:500;">全ての構成要素</span>
<svg class="b" style="left:933.8px;top:313.0px;" width="3.6" height="2.6" viewBox="0 0 3.6 2.6"><path d="M0.4 0.5L1.8 2l1.4-1.5" fill="none" stroke="#555" stroke-width="0.6"/></svg>
<svg class="b" style="left:942.6px;top:310.6px;" width="6.8" height="6.8" viewBox="0 0 6.8 6.8"><path d="M1 6V3.2h1.2V1l1.4-0.4v2.6h2.2V6z" fill="#fff" stroke="#4a4a4a" stroke-width="0.6"/></svg>
<span class="t" style="left:950.40px;top:313.00px;font-size:4.4px;color:#151515;transform:scaleX(0.966);font-weight:500;">材質</span>
<svg class="b" style="left:946.4px;top:319.2px;" width="6.8" height="6.8" viewBox="0 0 6.8 6.8"><rect x="0.8" y="0.5" width="4.8" height="6" fill="#fff" stroke="#555" stroke-width="0.7"/><path d="M0.8 2.2h4.8M0.8 3.6h4.8M0.8 5h4.8M2.6 0.5v6" stroke="#555" stroke-width="0.5"/></svg>
<span class="t" style="left:954.60px;top:321.00px;font-size:4.4px;color:#151515;transform:scaleX(0.910);font-weight:500;">建具の材質</span>
<svg class="b" style="left:946.4px;top:327.7px;" width="6.8" height="6.8" viewBox="0 0 6.8 6.8"><rect x="0.8" y="0.5" width="4.8" height="6" fill="#fff" stroke="#555" stroke-width="0.7"/><path d="M0.8 2.2h4.8M0.8 3.6h4.8M0.8 5h4.8M2.6 0.5v6" stroke="#555" stroke-width="0.5"/></svg>
<span class="t" style="left:954.60px;top:330.00px;font-size:4.4px;color:#151515;transform:scaleX(0.910);font-weight:500;">全ての材質</span>
<svg class="b" style="left:946.4px;top:336.3px;" width="6.8" height="6.8" viewBox="0 0 6.8 6.8"><rect x="0.8" y="0.5" width="4.8" height="6" fill="#fff" stroke="#555" stroke-width="0.7"/><path d="M0.8 2.2h4.8M0.8 3.6h4.8M0.8 5h4.8M2.6 0.5v6" stroke="#555" stroke-width="0.5"/></svg>
<span class="t" style="left:954.60px;top:338.00px;font-size:4.4px;color:#151515;transform:scaleX(0.879);font-weight:500;">要素ごとの材質</span>
<svg class="b" style="left:934.0px;top:346.8px;" width="2.6" height="3.6" viewBox="0 0 2.6 3.6"><path d="M0.5 0.4L2 1.8 0.5 3.2" fill="none" stroke="#aaa" stroke-width="0.5"/></svg>
<svg class="b" style="left:938.8px;top:344.9px;" width="6.8" height="6.8" viewBox="0 0 6.8 6.8"><rect x="0.6" y="0.8" width="5.4" height="3.8" fill="#fff" stroke="#4a4a4a" stroke-width="0.7"/><path d="M0.6 5.8h5.6M1.6 2.2h3.4M1.6 3.4h2" stroke="#4a4a4a" stroke-width="0.5"/></svg>
<span class="t" style="left:946.60px;top:347.00px;font-size:4.4px;color:#444;transform:scaleX(0.742);font-weight:500;">プロジェクトインデックス</span>
<svg class="b" style="left:933.4px;top:355.8px;" width="3.6" height="2.6" viewBox="0 0 3.6 2.6"><path d="M0.4 0.5L1.8 2l1.4-1.5" fill="none" stroke="#555" stroke-width="0.6"/></svg>
<svg class="b" style="left:938.8px;top:353.4px;" width="6.8" height="6.8" viewBox="0 0 6.8 6.8"><rect x="0.8" y="0.6" width="4.6" height="5.6" fill="#e6e6e6" stroke="#cfcfcf" stroke-width="0.6"/></svg>
<span class="t" style="left:946.60px;top:356.00px;font-size:4.4px;color:#555;transform:scaleX(0.607);font-weight:500;">リスト</span>
<svg class="b" style="left:933.8px;top:364.4px;" width="3.6" height="2.6" viewBox="0 0 3.6 2.6"><path d="M0.4 0.5L1.8 2l1.4-1.5" fill="none" stroke="#555" stroke-width="0.6"/></svg>
<svg class="b" style="left:942.6px;top:362.0px;" width="6.8" height="6.8" viewBox="0 0 6.8 6.8"><path d="M0.6 2.6h5.6M0.6 3.6h5.6" stroke="#4a4a4a" stroke-width="0.6" stroke-dasharray="1 0.5"/></svg>
<span class="t" style="left:950.40px;top:364.00px;font-size:4.4px;color:#151515;transform:scaleX(0.966);font-weight:500;">要素</span>
<svg class="b" style="left:946.4px;top:370.5px;" width="6.8" height="6.8" viewBox="0 0 6.8 6.8"><path d="M1 0.6h3l1.4 1.4v4.4H1z" fill="#fff" stroke="#555" stroke-width="0.7"/><path d="M2 3.2h2.4v1.6H2z" fill="#555"/></svg>
<span class="t" style="left:954.60px;top:373.00px;font-size:4.4px;color:#151515;transform:scaleX(0.966);font-weight:500;">基本</span>
<svg class="b" style="left:946.4px;top:379.1px;" width="6.8" height="6.8" viewBox="0 0 6.8 6.8"><path d="M1 0.6h3l1.4 1.4v4.4H1z" fill="#fff" stroke="#555" stroke-width="0.7"/><path d="M2 3.2h2.4v1.6H2z" fill="#555"/></svg>
<span class="t" style="left:954.60px;top:381.00px;font-size:4.4px;color:#151515;transform:scaleX(1.080);font-weight:500;">数量積算 (A4縦)</span>
<svg class="b" style="left:946.4px;top:387.9px;" width="6.8" height="6.8" viewBox="0 0 6.8 6.8"><path d="M1 0.6h3l1.4 1.4v4.4H1z" fill="#fff" stroke="#777" stroke-width="0.7"/><path d="M2 3.2h2.4v1.6H2z" fill="#777"/></svg>
<span class="t" style="left:954.60px;top:390.00px;font-size:4.4px;color:#777;transform:scaleX(1.040);">仕上表  (A3 ヨコ)</span>
<div class="b" style="left:927.2px;top:390.6px;width:71px;height:7px;background:#f1f1f1;"></div>
<svg class="b" style="left:928.6px;top:392.4px;" width="3" height="3.6" viewBox="0 0 3 3.6"><path d="M2.4 0.4L0.6 1.8l1.8 1.4z" fill="#444"/></svg>
<div class="b" style="left:933px;top:391.4px;width:44.5px;height:5px;background:#cdcdcd;"></div>
<svg class="b" style="left:987px;top:392.4px;" width="3" height="3.6" viewBox="0 0 3 3.6"><path d="M0.6 0.4l1.8 1.4-1.8 1.4z" fill="#444"/></svg>
<svg class="b" style="left:965.6px;top:400.2px;" width="8" height="8" viewBox="0 0 8 8"><rect x="0.8" y="0.8" width="5.6" height="5.2" fill="#fff" stroke="#3e6fa8" stroke-width="0.9"/><path d="M3.6 3.6h3.4v3.4H3.6z" fill="#fff" stroke="#3e6fa8" stroke-width="0.7"/></svg>
<svg class="b" style="left:978.4px;top:400.6px;" width="7" height="7.4" viewBox="0 0 7 7.4"><path d="M1 1h3.4l1.6 1.6v4H1z" fill="#fbfbfb" stroke="#c9d7e8" stroke-width="0.7"/></svg>
<svg class="b" style="left:989.4px;top:401px;" width="7" height="7" viewBox="0 0 7 7"><path d="M1 1l4.6 4.6M5.6 1L1 5.6" stroke="#f0c8a8" stroke-width="0.9"/></svg>
<div class="b" style="left:927.2px;top:411px;width:70.8px;height:7.5px;background:#d6d6d6;"></div>
<svg class="b" style="left:930.2px;top:413.8px;" width="2.6" height="2" viewBox="0 0 2.6 2"><path d="M0 0h2.8L1.4 2z" fill="#444"/></svg>
<span class="t" style="left:935.40px;top:413.00px;font-size:4.4px;color:#222;transform:scaleX(1.091);">特性</span>
<svg class="b" style="left:928.8px;top:421.6px;" width="5" height="5" viewBox="0 0 5 5"><rect x="0.6" y="0.8" width="3.6" height="3.2" fill="none" stroke="#555" stroke-width="0.6"/></svg>
<span class="t" style="left:951.00px;top:423.00px;font-size:4.4px;color:#333;transform:scaleX(0.965);">パース</span>
<div class="b" style="left:927.6px;top:429.2px;width:70px;height:8.4px;background:#e2e2e2;box-shadow:inset 0 0 0 1px #d2d2d2;"></div>
<span class="t" style="left:955.75px;top:432.00px;font-size:4.4px;color:#222;transform:scaleX(1.084);">設定...</span>
<div class="b" style="left:948px;top:440.6px;width:28px;height:0.6px;background:#cfcfcf;"></div>
<svg class="b" style="left:928.4px;top:441.9px;" width="6.8" height="6.8" viewBox="0 0 6.8 6.8"><path d="M0.6 4.6L4.4 0.8l1.2 1.2L1.8 5.8zM2 3.4l0.8 0.8M3.2 2.2l0.8 0.8" fill="none" stroke="#555" stroke-width="0.5"/></svg>
<span class="t" style="left:937.40px;top:444.00px;font-size:4.4px;color:#222;transform:scaleX(0.842);font-weight:500;">デフォルト</span>
<svg class="b" style="left:994.86px;top:444.3px;" width="1.1700000000000002" height="1.8" viewBox="0 0 1.1700000000000002 1.8"><path d="M0 0v1.8L1.1700000000000002 0.9z" fill="#444"/></svg>
<svg class="b" style="left:928.4px;top:449.3px;" width="6.8" height="6.8" viewBox="0 0 6.8 6.8"><path d="M0.4 2.2h5.8v2H0.4z" fill="none" stroke="#555" stroke-width="0.6"/></svg>
<span class="t" style="left:937.40px;top:451.00px;font-size:5.0px;color:#333;transform:scaleX(0.919);font-weight:500;">1:100</span>
<svg class="b" style="left:994.86px;top:451.72px;" width="1.1700000000000002" height="1.8" viewBox="0 0 1.1700000000000002 1.8"><path d="M0 0v1.8L1.1700000000000002 0.9z" fill="#444"/></svg>
<svg class="b" style="left:928.4px;top:456.7px;" width="6.8" height="6.8" viewBox="0 0 6.8 6.8"><path d="M0.6 1h5.4v4.6H0.6zM0.6 2.6h5.4M2.4 1v4.6M4.2 1v4.6" fill="#888" stroke="#444" stroke-width="0.5"/></svg>
<span class="t" style="left:937.40px;top:459.00px;font-size:4.4px;color:#222;transform:scaleX(0.910);font-weight:500;">モデル全体</span>
<svg class="b" style="left:994.86px;top:459.14px;" width="1.1700000000000002" height="1.8" viewBox="0 0 1.1700000000000002 1.8"><path d="M0 0v1.8L1.1700000000000002 0.9z" fill="#444"/></svg>
<svg class="b" style="left:928.4px;top:464.2px;" width="6.8" height="6.8" viewBox="0 0 6.8 6.8"><path d="M2 0.8h2.4v3L3.2 5.8 2 3.8z" fill="none" stroke="#444" stroke-width="0.6"/></svg>
<span class="t" style="left:937.40px;top:466.00px;font-size:4.4px;color:#222;transform:scaleX(1.035);font-weight:500;">01 意匠設計</span>
<svg class="b" style="left:994.86px;top:466.56px;" width="1.1700000000000002" height="1.8" viewBox="0 0 1.1700000000000002 1.8"><path d="M0 0v1.8L1.1700000000000002 0.9z" fill="#444"/></svg>
<svg class="b" style="left:928.4px;top:471.6px;" width="6.8" height="6.8" viewBox="0 0 6.8 6.8"><path d="M0.6 1.2h5.4v4.4H0.6zM0.6 2.6h5.4M2.4 1.2V0.4M4.2 1.2V0.4" fill="none" stroke="#555" stroke-width="0.6"/></svg>
<span class="t" style="left:937.40px;top:473.00px;font-size:4.4px;color:#444;transform:scaleX(0.842);font-weight:500;">デフォルト</span>
<svg class="b" style="left:994.86px;top:473.98px;" width="1.1700000000000002" height="1.8" viewBox="0 0 1.1700000000000002 1.8"><path d="M0 0v1.8L1.1700000000000002 0.9z" fill="#444"/></svg>
<svg class="b" style="left:928.4px;top:479.0px;" width="6.8" height="6.8" viewBox="0 0 6.8 6.8"><path d="M1.2 1h3v2.4h-3zM2.4 3.4v1.4M3 3.2h2.6v3H3z" fill="none" stroke="#444" stroke-width="0.6"/></svg>
<span class="t" style="left:937.40px;top:481.00px;font-size:4.4px;color:#222;transform:scaleX(0.910);font-weight:500;">上書きなし</span>
<svg class="b" style="left:994.86px;top:481.4px;" width="1.1700000000000002" height="1.8" viewBox="0 0 1.1700000000000002 1.8"><path d="M0 0v1.8L1.1700000000000002 0.9z" fill="#444"/></svg>
<svg class="b" style="left:928.4px;top:486.4px;" width="6.8" height="6.8" viewBox="0 0 6.8 6.8"><path d="M1 5.8V3.6l2-2.4 2.2 2.4v2.2zM0.6 5.8h5.4" fill="none" stroke="#555" stroke-width="0.6"/></svg>
<span class="t" style="left:937.40px;top:488.00px;font-size:4.4px;color:#222;transform:scaleX(0.953);font-weight:500;">00 すべての要素を表示</span>
<svg class="b" style="left:994.86px;top:488.82px;" width="1.1700000000000002" height="1.8" viewBox="0 0 1.1700000000000002 1.8"><path d="M0 0v1.8L1.1700000000000002 0.9z" fill="#444"/></svg>
<svg class="b" style="left:928.4px;top:493.8px;" width="6.8" height="6.8" viewBox="0 0 6.8 6.8"><path d="M1 2.4L3.8 1l1.6 0.8v3.4L2.6 6.4 1 5.6zM4.6 0.6l1.4 1.2" fill="none" stroke="#444" stroke-width="0.6"/></svg>
<span class="t" style="left:937.40px;top:496.00px;font-size:4.4px;color:#222;transform:scaleX(0.836);font-weight:500;">OGベーシック</span>
<svg class="b" style="left:994.86px;top:496.24px;" width="1.1700000000000002" height="1.8" viewBox="0 0 1.1700000000000002 1.8"><path d="M0 0v1.8L1.1700000000000002 0.9z" fill="#444"/></svg>
<svg class="b" style="left:928.4px;top:501.3px;" width="6.8" height="6.8" viewBox="0 0 6.8 6.8"><rect x="0.8" y="0.8" width="3.6" height="3.6" fill="none" stroke="#b5b5b5" stroke-width="0.6"/><path d="M4.2 4.2l1.8 1.8" stroke="#b5b5b5" stroke-width="0.7"/></svg>
<span class="t" style="left:937.40px;top:503.00px;font-size:4.4px;color:#b0b0b0;transform:scaleX(0.768);font-weight:500;">新規なし</span>
<svg class="b" style="left:994.86px;top:503.66px;" width="1.1700000000000002" height="1.8" viewBox="0 0 1.1700000000000002 1.8"><path d="M0 0v1.8L1.1700000000000002 0.9z" fill="#c0c0c0"/></svg>
<svg class="b" style="left:928.4px;top:508.7px;" width="6.8" height="6.8" viewBox="0 0 6.8 6.8"><path d="M3.2 0.8v5M0.8 3.2h5" stroke="#c4c4c4" stroke-width="0.6"/></svg>
<span class="t" style="left:937.40px;top:511.00px;font-size:4.4px;color:#b8b8b8;transform:scaleX(0.768);font-weight:500;">新規なし</span>
<svg class="b" style="left:994.86px;top:511.08px;" width="1.1700000000000002" height="1.8" viewBox="0 0 1.1700000000000002 1.8"><path d="M0 0v1.8L1.1700000000000002 0.9z" fill="#c0c0c0"/></svg>
<svg class="b" style="left:35.6px;top:516px;" width="6" height="6.4" viewBox="0 0 6 6.4"><path d="M1 3.2l2.2-2.2v1.4h2v1.6h-2v1.4z" fill="none" stroke="#666" stroke-width="0.6"/></svg>
<svg class="b" style="left:43.6px;top:516px;" width="6" height="6.4" viewBox="0 0 6 6.4"><path d="M5 3.2L2.8 1v1.4h-2v1.6h2v1.4z" fill="none" stroke="#c4c4c4" stroke-width="0.6"/></svg>
<svg class="b" style="left:52.4px;top:516px;" width="6.4" height="6.4" viewBox="0 0 6.4 6.4"><circle cx="2.8" cy="2.8" r="2" fill="none" stroke="#666" stroke-width="0.6"/><path d="M4.2 4.2l1.6 1.6" stroke="#666" stroke-width="0.7"/></svg>
<div class="b" style="left:61.6px;top:516px;width:0.7px;height:6.4px;background:#bdbdbd;"></div>
<svg class="b" style="left:64.4px;top:516.4px;" width="6" height="5.6" viewBox="0 0 6 5.6"><path d="M0.6 2.2h4.8M3 2.2v2.6M1.8 4.8h2.4" fill="none" stroke="#666" stroke-width="0.6"/><circle cx="3" cy="1.6" r="1" fill="none" stroke="#666" stroke-width="0.5"/></svg>
<svg class="b" style="left:73.2px;top:517.6px;" width="2.4" height="3.4" viewBox="0 0 2.4 3.4"><path d="M0 3.2h2.4L1.2 0z" fill="#444"/></svg>
<div class="b" style="left:80.2px;top:516px;width:0.7px;height:6.4px;background:#bdbdbd;"></div>
<svg class="b" style="left:83px;top:516px;" width="6.8" height="6.8" viewBox="0 0 6.8 6.8"><circle cx="3" cy="3" r="2.2" fill="none" stroke="#444" stroke-width="0.7"/><path d="M4.6 4.6l1.8 1.8" stroke="#444" stroke-width="0.8"/></svg>
<span class="t" style="left:120.00px;top:518.00px;font-size:4.4px;color:#a4a4a4;transform:scaleX(1.024);">新規なし</span>
<svg class="b" style="left:162.46px;top:518.3px;" width="1.1700000000000002" height="1.8" viewBox="0 0 1.1700000000000002 1.8"><path d="M0 0v1.8L1.1700000000000002 0.9z" fill="#999"/></svg>
<div class="b" style="left:169.4px;top:516px;width:0.7px;height:6.4px;background:#bdbdbd;"></div>
<svg class="b" style="left:172px;top:516.6px;" width="5.4" height="5.4" viewBox="0 0 5.4 5.4"><path d="M2.6 0.6v4.2M0.6 2.6h4.2" stroke="#c4c4c4" stroke-width="0.6"/></svg>
<span class="t" style="left:204.00px;top:518.00px;font-size:4.4px;color:#a4a4a4;">新規なし</span>
<svg class="b" style="left:247.46px;top:518.3px;" width="1.1700000000000002" height="1.8" viewBox="0 0 1.1700000000000002 1.8"><path d="M0 0v1.8L1.1700000000000002 0.9z" fill="#999"/></svg>
<div class="b" style="left:252.4px;top:516px;width:0.7px;height:6.4px;background:#bdbdbd;"></div>
<svg class="b" style="left:254.4px;top:516.8px;" width="6.4" height="5" viewBox="0 0 6.4 5"><path d="M0.4 1.4h5.4v2.2H0.4zM1.6 1.4v1M3 1.4v1M4.4 1.4v1" fill="none" stroke="#555" stroke-width="0.5"/></svg>
<span class="t" style="left:291.00px;top:517.00px;font-size:5.0px;color:#333;transform:scaleX(1.079);">1:100</span>
<svg class="b" style="left:331.86px;top:518.3px;" width="1.1700000000000002" height="1.8" viewBox="0 0 1.1700000000000002 1.8"><path d="M0 0v1.8L1.1700000000000002 0.9z" fill="#444"/></svg>
<div class="b" style="left:336px;top:516px;width:0.7px;height:6.4px;background:#bdbdbd;"></div>
<svg class="b" style="left:338.4px;top:516.4px;" width="6" height="6" viewBox="0 0 6 6"><path d="M0.6 4.6L4.4 0.8l1 1L1.6 5.6z" fill="none" stroke="#555" stroke-width="0.6"/></svg>
<span class="t" style="left:370.00px;top:518.00px;font-size:4.4px;color:#333;transform:scaleX(0.910);">デフォルト</span>
<svg class="b" style="left:415.06px;top:518.3px;" width="1.1700000000000002" height="1.8" viewBox="0 0 1.1700000000000002 1.8"><path d="M0 0v1.8L1.1700000000000002 0.9z" fill="#444"/></svg>
<div class="b" style="left:420.4px;top:516px;width:0.7px;height:6.4px;background:#bdbdbd;"></div>
<svg class="b" style="left:423.4px;top:516.6px;" width="6" height="5.6" viewBox="0 0 6 5.6"><path d="M0.6 0.8h4.8v4H0.6zM0.6 2.2h4.8M2.2 0.8v4M3.8 0.8v4" fill="#999" stroke="#555" stroke-width="0.5"/></svg>
<span class="t" style="left:455.00px;top:518.00px;font-size:4.4px;color:#333;transform:scaleX(0.956);">モデル全体</span>
<svg class="b" style="left:501.66px;top:518.3px;" width="1.1700000000000002" height="1.8" viewBox="0 0 1.1700000000000002 1.8"><path d="M0 0v1.8L1.1700000000000002 0.9z" fill="#444"/></svg>
<div class="b" style="left:507.4px;top:516px;width:0.7px;height:6.4px;background:#bdbdbd;"></div>
<svg class="b" style="left:510px;top:516.4px;" width="5" height="6" viewBox="0 0 5 6"><path d="M1.6 0.6h1.8v2.6L2.5 5 1.6 3.2z" fill="none" stroke="#555" stroke-width="0.6"/></svg>
<span class="t" style="left:538.00px;top:518.00px;font-size:4.4px;color:#333;transform:scaleX(0.950);">01 意匠設計</span>
<svg class="b" style="left:585.86px;top:518.3px;" width="1.1700000000000002" height="1.8" viewBox="0 0 1.1700000000000002 1.8"><path d="M0 0v1.8L1.1700000000000002 0.9z" fill="#444"/></svg>
<div class="b" style="left:590.4px;top:516px;width:0.7px;height:6.4px;background:#bdbdbd;"></div>
<svg class="b" style="left:593px;top:516.6px;" width="6" height="5.6" viewBox="0 0 6 5.6"><path d="M0.6 1h4.8v4H0.6zM0.6 2.4h4.8" fill="none" stroke="#999" stroke-width="0.6"/></svg>
<span class="t" style="left:626.00px;top:518.00px;font-size:4.4px;color:#333;transform:scaleX(0.888);">デフォルト</span>
<svg class="b" style="left:670.46px;top:518.3px;" width="1.1700000000000002" height="1.8" viewBox="0 0 1.1700000000000002 1.8"><path d="M0 0v1.8L1.1700000000000002 0.9z" fill="#444"/></svg>
<div class="b" style="left:675.4px;top:516px;width:0.7px;height:6.4px;background:#bdbdbd;"></div>
<svg class="b" style="left:678.6px;top:516.4px;" width="5.6" height="6" viewBox="0 0 5.6 6"><path d="M0.8 0.8h2.6v2.2H0.8zM2 3v1.2M2.6 2.8h2.4v2.8H2.6z" fill="none" stroke="#555" stroke-width="0.6"/></svg>
<span class="t" style="left:710.00px;top:518.00px;font-size:4.4px;color:#333;transform:scaleX(0.933);">上書きなし</span>
<svg class="b" style="left:755.86px;top:518.3px;" width="1.1700000000000002" height="1.8" viewBox="0 0 1.1700000000000002 1.8"><path d="M0 0v1.8L1.1700000000000002 0.9z" fill="#444"/></svg>
<div class="b" style="left:760.4px;top:516px;width:0.7px;height:6.4px;background:#bdbdbd;"></div>
<svg class="b" style="left:763px;top:516.4px;" width="6" height="6" viewBox="0 0 6 6"><path d="M1 5.4V3.4l2-2.2 2 2.2v2zM0.4 5.4h5.2" fill="none" stroke="#555" stroke-width="0.6"/></svg>
<span class="t" style="left:784.00px;top:518.00px;font-size:4.4px;color:#333;transform:scaleX(0.975);">00 すべての要素を表示</span>
<svg class="b" style="left:840.06px;top:518.3px;" width="1.1700000000000002" height="1.8" viewBox="0 0 1.1700000000000002 1.8"><path d="M0 0v1.8L1.1700000000000002 0.9z" fill="#444"/></svg>
<div class="b" style="left:845px;top:516px;width:0.7px;height:6.4px;background:#bdbdbd;"></div>
<svg class="b" style="left:848px;top:516.4px;" width="6" height="6" viewBox="0 0 6 6"><path d="M0.8 2.4L3.4 1l1.6 0.8v3L2.4 6 0.8 5.2zM4.4 0.6l1.2 1" fill="none" stroke="#555" stroke-width="0.6"/></svg>
<span class="t" style="left:875.00px;top:518.00px;font-size:4.4px;color:#333;transform:scaleX(0.941);">OGベーシック</span>
<svg class="b" style="left:922.86px;top:518.3px;" width="1.1700000000000002" height="1.8" viewBox="0 0 1.1700000000000002 1.8"><path d="M0 0v1.8L1.1700000000000002 0.9z" fill="#444"/></svg>
<svg class="b" style="left:54.1px;top:527px;" width="7" height="7" viewBox="0 0 7 7"><path d="M3.4 1v5" stroke="#d4d4d4" stroke-width="0.7"/></svg>
<svg class="b" style="left:60.1px;top:527px;" width="7" height="7" viewBox="0 0 7 7"><path d="M1 5.2C1.6 2.6 4 1.6 5.8 2.6M4.4 1.2l1.6 1.4-1.6 1.6" fill="none" stroke="#cfcfcf" stroke-width="0.7"/></svg>
<svg class="b" style="left:67.6px;top:527px;" width="7" height="7" viewBox="0 0 7 7"><path d="M1 5.2C1.6 2.6 4 1.6 5.8 2.6M4.4 1.2l1.6 1.4-1.6 1.6" fill="none" stroke="#cfcfcf" stroke-width="0.7"/></svg>
<span class="t" style="left:75.00px;top:525.00px;font-size:4.4px;color:#666;transform:scaleX(0.862);">選択内容のレイヤー:</span>
<span class="t" style="left:112.40px;top:525.00px;font-size:4.4px;color:#666;transform:scaleX(0.856);">その他のレイヤー:</span>
<div class="b" style="left:110.8px;top:524.4px;width:0.6px;height:10.6px;background:#c8c8c8;"></div>
<div class="b" style="left:147.4px;top:524.4px;width:0.6px;height:10.6px;background:#c8c8c8;"></div>
<svg class="b" style="left:78px;top:529.4px;" width="7" height="5" viewBox="0 0 7 5"><path d="M0.6 2.4C2 0.6 5 0.6 6.4 2.4 5 4.2 2 4.2 0.6 2.4z" fill="none" stroke="#d0d0d0" stroke-width="0.6"/></svg>
<svg class="b" style="left:91px;top:529.4px;" width="7" height="5" viewBox="0 0 7 5"><path d="M2 0.6v3.6M1 3.2h3" stroke="#d8d8d8" stroke-width="0.6"/></svg>
<svg class="b" style="left:101px;top:529.4px;" width="7" height="5" viewBox="0 0 7 5"><path d="M2 0.6v3.6M1 3.2h3" stroke="#d8d8d8" stroke-width="0.6"/></svg>
<svg class="b" style="left:116px;top:529.4px;" width="7" height="5" viewBox="0 0 7 5"><path d="M0.6 2.4C2 0.6 5 0.6 6.4 2.4 5 4.2 2 4.2 0.6 2.4z" fill="none" stroke="#d0d0d0" stroke-width="0.6"/></svg>
<svg class="b" style="left:128px;top:529.4px;" width="7" height="5" viewBox="0 0 7 5"><path d="M2 0.6v3.6M1 3.2h3" stroke="#d8d8d8" stroke-width="0.6"/></svg>
<svg class="b" style="left:150.4px;top:525.4px;" width="6" height="9" viewBox="0 0 6 9"><path d="M1 2.6C2 1 4 1 5 2.2M1 6.2l2 1.6" fill="none" stroke="#d8d8d8" stroke-width="0.7"/></svg>
<span class="t" style="left:2.00px;top:540.00px;font-size:4.4px;color:#111;transform:scaleX(0.880);">回転方向を完成させます。</span>
<svg class="b" style="left:929.6px;top:537.6px;" width="7" height="7" viewBox="0 0 7 7"><path d="M1 2h5v4H1z" fill="none" stroke="#555" stroke-width="0.7"/><path d="M1.6 1h3.8" stroke="#555" stroke-width="0.7"/><circle cx="3.5" cy="4" r="0.9" fill="#555"/></svg>
<span class="t" style="left:944.00px;top:539.00px;font-size:5.0px;color:#aaaaaa;">GRAPHISOFT ID</span>
<div class="b" style="left:926.6px;top:537px;width:0.6px;height:8px;background:#d4d4d4;"></div>
</body></html>
